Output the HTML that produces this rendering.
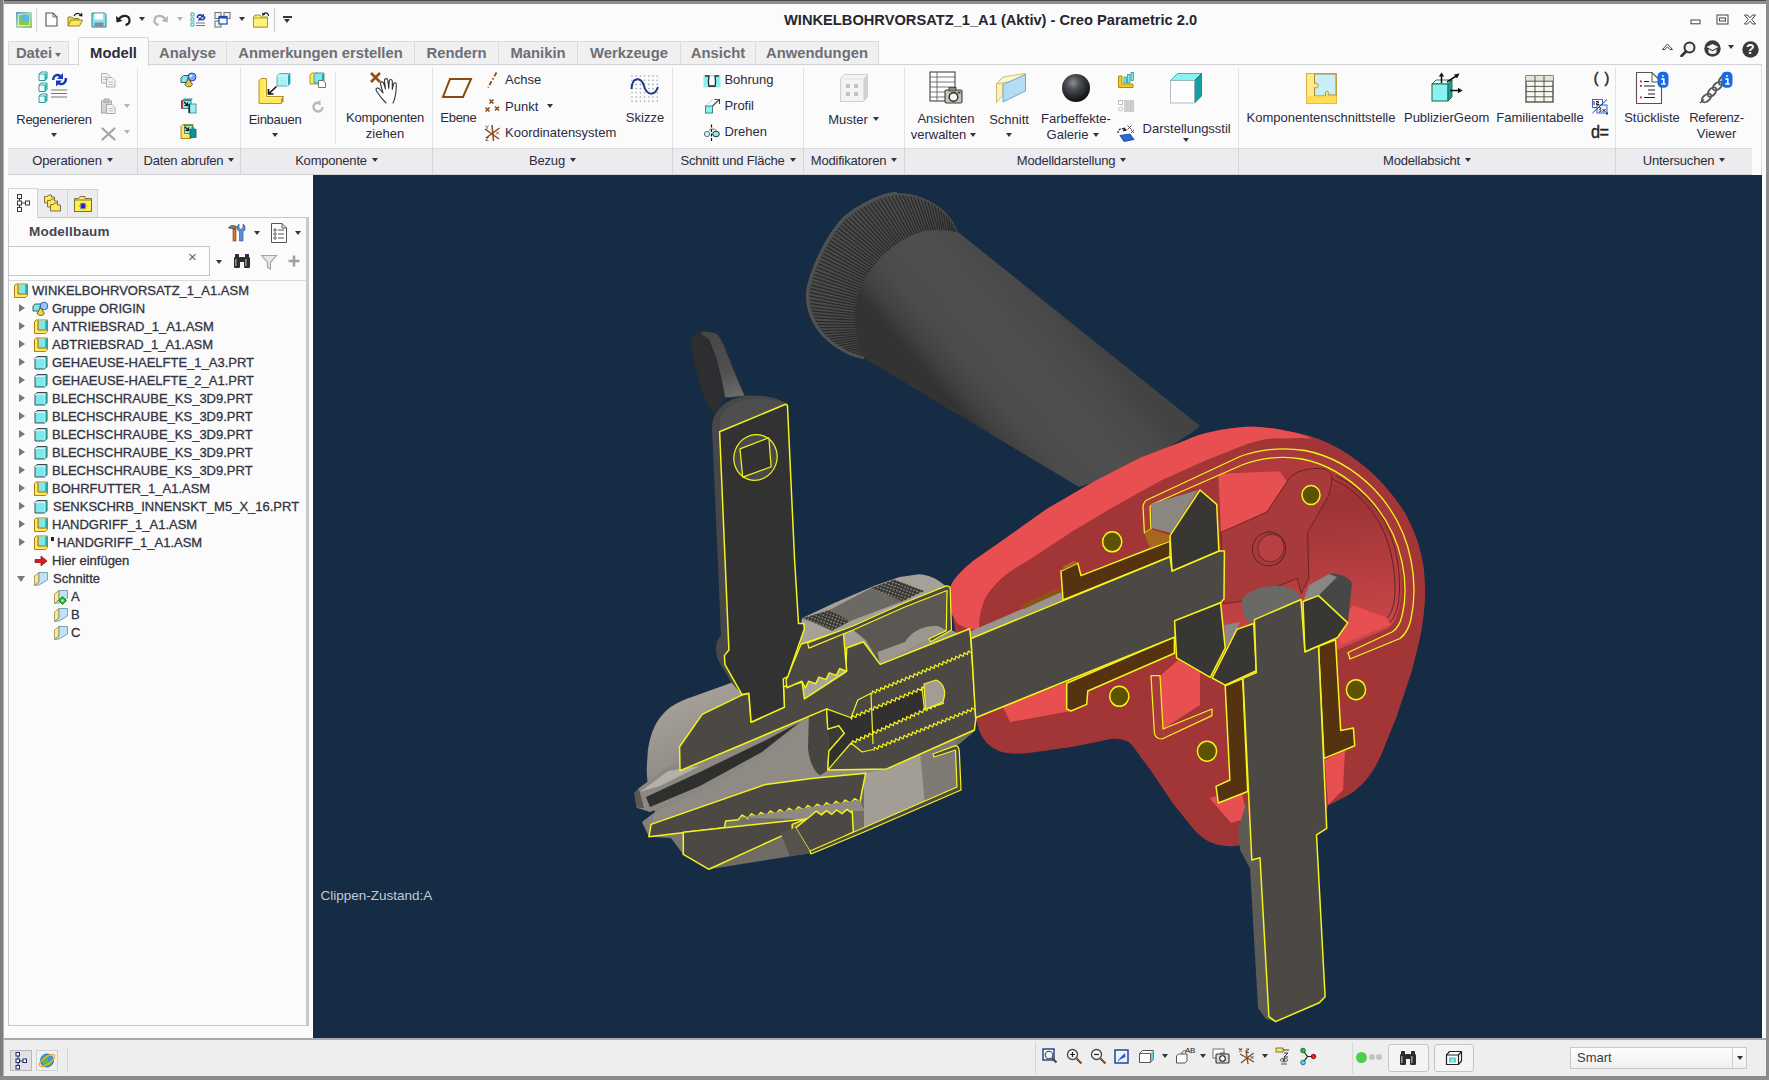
<!DOCTYPE html>
<html lang="de">
<head>
<meta charset="utf-8">
<title>WINKELBOHRVORSATZ_1_A1 (Aktiv) - Creo Parametric 2.0</title>
<style>
html,body{margin:0;padding:0;background:#fbfbfc;}
body{width:1769px;height:1080px;overflow:hidden;position:relative;font-family:"Liberation Sans",sans-serif;font-size:13px;color:#2b2b3c;}
#app{position:absolute;left:0;top:0;width:1769px;height:1080px;background:#fbfbfc;overflow:hidden;}
.abs{position:absolute;}
.t{position:absolute;white-space:nowrap;line-height:14px;letter-spacing:0;}
.n{letter-spacing:-0.28px;}
.c{transform:translateX(-50%);text-align:center;}
.tab{position:absolute;top:41px;height:23px;background:#f0f0f1;border:1px solid #dcdcde;border-bottom:none;box-sizing:border-box;font-weight:bold;font-size:14.8px;color:#6e6e76;line-height:22px;text-align:center;white-space:nowrap;}
.tab.act{top:37px;height:29px;background:#fbfbfc;color:#2b2b3c;line-height:30px;border-color:#d4d4d8;z-index:2;border-radius:2px 2px 0 0;}
.gl{letter-spacing:-0.2px;position:absolute;top:148px;height:26px;border-right:1px solid #d6d6d9;box-sizing:border-box;text-align:center;line-height:26px;white-space:nowrap;}
.dd{display:inline-block;width:0;height:0;border-left:3.5px solid transparent;border-right:3.5px solid transparent;border-top:4.5px solid #33333f;vertical-align:middle;margin-left:5px;position:relative;top:-2px;}
.dd.g{border-top-color:#b8b8bc;}
.da{position:absolute;width:0;height:0;border-left:3.5px solid transparent;border-right:3.5px solid transparent;border-top:4.5px solid #33333f;}
.vsep{position:absolute;width:1px;background:#e3e3e6;}
.tr{position:absolute;left:0;height:18px;line-height:18px;white-space:nowrap;font-size:13px;color:#33333f;-webkit-text-stroke:0.3px #33333f;}
.arr{position:absolute;width:0;height:0;border-top:4.5px solid transparent;border-bottom:4.5px solid transparent;border-left:6px solid #77777d;}
</style>
</head>
<body>
<div id="app">
<!-- window border -->
<div class="abs" style="left:0;top:0;width:1769px;height:4px;background:#8e8e8e;"></div><div class="abs" style="left:0;top:0;width:1769px;height:1px;background:#4c4c4c;"></div>
<div class="abs" style="left:0;top:0;width:3px;height:1080px;background:#7d7d7d;"></div>
<div class="abs" style="left:3px;top:0;width:1px;height:1080px;background:#b5b5b5;"></div>
<div class="abs" style="left:1766px;top:0;width:3px;height:1080px;background:#8b8b8b;"></div>
<div class="abs" style="left:0;top:1076px;width:1769px;height:4px;background:#8b8b8b;"></div>

<!-- TOPBAR -->
<svg class="abs" style="left:16px;top:12px" width="16" height="16" viewBox="0 0 16 16"><defs><linearGradient id="ag" x1="0" y1="0" x2="1" y2="1"><stop offset="0" stop-color="#3a8ad8"/><stop offset="0.500" stop-color="#9fd4a0"/><stop offset="1" stop-color="#7ac030"/></linearGradient></defs><rect x="0" y="0" width="16" height="16" fill="url(#ag)" opacity="0.850"/><rect x="2.500" y="2.500" width="11" height="11" fill="#8cc83c" stroke="#eaf6e0" stroke-width="0.800"/><rect x="6" y="2.500" width="7.500" height="7.500" fill="#58b8e8"/></svg>
<div class="abs" style="left:36px;top:8px;width:1px;height:24px;background:#d8d8dc;"></div>
<svg class="abs" style="left:45px;top:12px" width="13" height="15" viewBox="0 0 13 15"><path d="M1,1 H8 L12,5 V14 H1 Z" fill="#fff" stroke="#555" stroke-width="1.100"/><path d="M8,1 V5 H12" fill="none" stroke="#555" stroke-width="0.900"/></svg>
<svg class="abs" style="left:67px;top:11px" width="17" height="16" viewBox="0 0 17 16"><path d="M1,15 V6 H5 L6.500,7.500 H12 V9" fill="#f0d850" stroke="#8a7a20" stroke-width="0.900"/><path d="M1,15 L4,9 H15.500 L12.500,15 Z" fill="#f8e860" stroke="#8a7a20" stroke-width="0.900"/><path d="M7,5 C8.500,1.500 12.500,1.500 14,4.500" fill="none" stroke="#222" stroke-width="1.300"/><path d="M11.500,5 L15.500,5.500 L15,1.500 Z" fill="#222"/></svg>
<svg class="abs" style="left:91px;top:12px" width="16" height="16" viewBox="0 0 16 16"><path d="M1,1 H13.500 L15,2.500 V15 H1 Z" fill="#7fe9f0" stroke="#3a7a8a" stroke-width="1"/><rect x="3.500" y="1.500" width="8.500" height="6" fill="#fdfdfd"/><rect x="3.500" y="10.500" width="9" height="4" fill="#8a8a8e"/></svg>
<svg class="abs" style="left:115px;top:13px" width="17" height="13" viewBox="0 0 17 13"><path d="M4,6 C7,1.500 14,2 14.500,7 C14.800,10 12.500,11.500 10.500,12" fill="none" stroke="#222" stroke-width="2.200"/><path d="M1,3 L1.500,9.500 L7.500,8 Z" fill="#222"/></svg>
<span class="da" style="left:138.5px;top:17px;border-top-color:#33333f"></span>
<svg class="abs" style="left:152px;top:13px" width="17" height="13" viewBox="0 0 17 13"><path d="M13,6 C10,1.500 3,2 2.500,7 C2.200,10 4.500,11.500 6.500,12" fill="none" stroke="#b4b4b8" stroke-width="2.200"/><path d="M16,3 L15.500,9.500 L9.500,8 Z" fill="#b4b4b8"/></svg>
<span class="da" style="left:176.5px;top:17px;border-top-color:#b4b4b8"></span>
<svg class="abs" style="left:190px;top:12px" width="17" height="16" viewBox="0 0 17 16"><g fill="#e8ffff" stroke="#2a9a9c" stroke-width="0.800"><rect x="1" y="1" width="3" height="3"/><rect x="1" y="6" width="3" height="3"/><rect x="1" y="11" width="3" height="3"/></g><path d="M6.500,6 C6.500,2.500 10,1 12.500,3 L14,1.500 V5.500 H10 L11.300,4.200 C10,3.200 8,4 8.200,6 Z" fill="#1a3ab8"/><path d="M15.500,4.500 C16,8 12.500,9.500 10,8 L8.500,9.500 V5.800 H12.500 L11.200,7 C12.500,7.800 14,7 13.800,4.500 Z" fill="#1a3ab8"/><path d="M6,11 H15 M6,13.500 H15" stroke="#777" stroke-width="1"/></svg>
<svg class="abs" style="left:214px;top:11px" width="17" height="17" viewBox="0 0 17 17"><g fill="#f4f4f4" stroke="#777" stroke-width="1.100"><rect x="1" y="1.500" width="6" height="6"/><rect x="10" y="1.500" width="6" height="6"/><rect x="1" y="10" width="6" height="6"/></g><rect x="5" y="5.500" width="8" height="7.500" fill="#fdfdfd" stroke="#1a4ab8" stroke-width="1.200"/><rect x="5" y="5.500" width="8" height="2" fill="#1a4ab8"/></svg>
<span class="da" style="left:238.5px;top:17px;border-top-color:#33333f"></span>
<svg class="abs" style="left:252px;top:11px" width="18" height="17" viewBox="0 0 18 17"><path d="M1.500,6 L3,4 H8 L9.500,6 H15.500 V16 H1.500 Z" fill="#f8ec60" stroke="#9a8a20" stroke-width="0.900"/><path d="M1.500,16 V7 H15.500 V16 Z" fill="#fbf27a" stroke="#9a8a20" stroke-width="0.700"/><path d="M16.500,5 C16.500,2 13.500,1 11.500,3" fill="none" stroke="#222" stroke-width="1.200"/><path d="M10,1.500 L10.500,5 L13.500,3.500 Z" fill="#222"/></svg>
<div class="abs" style="left:274px;top:8px;width:1px;height:24px;background:#c8c8cc;"></div>
<div class="abs" style="left:283px;top:16px;width:9px;height:1.500px;background:#33333f;"></div>
<span class="da" style="left:284.0px;top:19px;border-top-color:#33333f"></span>
<svg class="abs" style="left:1690px;top:19px" width="11" height="6" viewBox="0 0 11 6"><rect x="1" y="1" width="9" height="3.800" fill="#fdfdfd" stroke="#444" stroke-width="1"/></svg>
<svg class="abs" style="left:1716px;top:14px" width="13" height="11" viewBox="0 0 13 11"><rect x="1" y="1" width="11" height="9" fill="#fdfdfd" stroke="#444" stroke-width="1"/><rect x="3.500" y="4" width="6" height="3" fill="none" stroke="#444" stroke-width="1"/></svg>
<svg class="abs" style="left:1743px;top:14px" width="14" height="11" viewBox="0 0 14 11"><path d="M1.500,1 H4.500 L7,3.800 L9.500,1 H12.500 L8.800,5.500 L12.500,10 H9.500 L7,7.200 L4.500,10 H1.500 L5.200,5.500 Z" fill="#fdfdfd" stroke="#444" stroke-width="1"/></svg>
<svg class="abs" style="left:1661px;top:42px" width="13" height="9" viewBox="0 0 13 9"><path d="M1.500,7.500 L6.500,2 L11.500,7.500 H9 L6.500,4.800 L4,7.500 Z" fill="#fdfdfd" stroke="#444" stroke-width="1"/></svg>
<svg class="abs" style="left:1680px;top:41px" width="16" height="16" viewBox="0 0 16 16"><circle cx="9.500" cy="6.500" r="5" fill="#e8f4f8" stroke="#333" stroke-width="2"/><path d="M6,10.500 L1.500,15" stroke="#333" stroke-width="2.600" stroke-linecap="round"/></svg>
<svg class="abs" style="left:1704px;top:40px" width="17" height="17" viewBox="0 0 17 17"><circle cx="8.500" cy="8.500" r="8.200" fill="#3a3a3c"/><path d="M2.500,7 L8.500,4 L14.500,7 L8.500,10 Z" fill="#f4f4f4"/><path d="M4.500,9 V12.500 C6.500,14.500 10.500,14.500 12.500,12.500 V9 L8.500,11.200 Z" fill="#f4f4f4"/></svg>
<span class="da" style="left:1727.5px;top:45px;border-top-color:#33333f"></span>
<svg class="abs" style="left:1742px;top:41px" width="17" height="17" viewBox="0 0 17 17"><circle cx="8.500" cy="8.500" r="8.200" fill="#3a3a3c"/></svg>
<div class="t" style="left:1746px;top:42px;font-weight:bold;font-size:14px;line-height:15px;color:#fff;">?</div>
<!-- /TOPBAR -->
<!-- title -->
<div class="t" id="title" style="letter-spacing:0;left:784px;top:12px;font-weight:bold;font-size:14.67px;line-height:16px;color:#26262e;">WINKELBOHRVORSATZ_1_A1 (Aktiv) - Creo Parametric 2.0</div>

<!-- TABS -->
<div class="abs" style="left:8px;top:64px;width:1754px;height:1px;background:#d4d4d8;"></div>
<div class="tab" style="left:8px;width:61px;">Datei<span class="dd" style="border-top-color:#6e6e76;margin-left:3px;top:1px;border-left-width:3px;border-right-width:3px;border-top-width:4px"></span></div>
<div class="tab act" style="left:78px;width:71px;">Modell</div>
<div class="tab" style="left:148px;width:79px;">Analyse</div>
<div class="tab" style="left:226px;width:189px;">Anmerkungen erstellen</div>
<div class="tab" style="left:414px;width:85px;">Rendern</div>
<div class="tab" style="left:498px;width:80px;">Manikin</div>
<div class="tab" style="left:577px;width:104px;">Werkzeuge</div>
<div class="tab" style="left:680px;width:76px;">Ansicht</div>
<div class="tab" style="left:755px;width:124px;">Anwendungen</div>

<!-- RIBBON group label bar -->
<div class="abs" id="glbar" style="left:8px;top:148px;width:1744px;height:27px;background:#ececee;border-top:1px solid #dadadd;border-bottom:1px solid #d0d0d4;box-sizing:border-box;"></div>
<div class="gl" style="left:8px;width:130px;">Operationen<span class="dd"></span></div>
<div class="gl" style="left:138px;width:103px;">Daten abrufen<span class="dd"></span></div>
<div class="gl" style="left:241px;width:192px;">Komponente<span class="dd"></span></div>
<div class="gl" style="left:433px;width:240px;">Bezug<span class="dd"></span></div>
<div class="gl" style="left:673px;width:131px;">Schnitt und Fläche<span class="dd"></span></div>
<div class="gl" style="left:804px;width:101px;">Modifikatoren<span class="dd"></span></div>
<div class="gl" style="left:905px;width:334px;">Modelldarstellung<span class="dd"></span></div>
<div class="gl" style="left:1239px;width:377px;">Modellabsicht<span class="dd"></span></div>
<div class="gl" style="left:1616px;width:136px;border-right:none;">Untersuchen<span class="dd"></span></div>

<!-- RIBBON-CONTENT -->
<div class="abs" style="left:1752px;top:65px;width:10px;height:110px;border-right:1px solid #dcdce0;box-sizing:border-box;"></div>
<div class="vsep" style="left:137px;top:68px;height:80px"></div>
<div class="vsep" style="left:240px;top:68px;height:80px"></div>
<div class="vsep" style="left:432px;top:68px;height:80px"></div>
<div class="vsep" style="left:672px;top:68px;height:80px"></div>
<div class="vsep" style="left:803px;top:68px;height:80px"></div>
<div class="vsep" style="left:904px;top:68px;height:80px"></div>
<div class="vsep" style="left:1238px;top:68px;height:80px"></div>
<div class="vsep" style="left:1615px;top:68px;height:80px"></div>
<div class="vsep" style="left:335px;top:72px;height:72px"></div>
<svg class="abs" style="left:38px;top:71px" width="32" height="33" viewBox="0 0 32 33"><g transform="translate(0,0)"><path d="M1,3 L3,1 L9,1 L9,7.500 L7,9.500 L1,9.500 Z" fill="#e8ffff" stroke="#2a8a8c" stroke-width="0.9"/><path d="M7,3 L9,1 L9,7.500 L7,9.500 Z" fill="#35c2c4"/><path d="M1,3 L7,3 L7,9.500" fill="none" stroke="#2a8a8c" stroke-width="0.8"/></g><g transform="translate(0,11)"><path d="M1,3 L3,1 L9,1 L9,7.500 L7,9.500 L1,9.500 Z" fill="#e8ffff" stroke="#2a8a8c" stroke-width="0.9"/><path d="M7,3 L9,1 L9,7.500 L7,9.500 Z" fill="#35c2c4"/><path d="M1,3 L7,3 L7,9.500" fill="none" stroke="#2a8a8c" stroke-width="0.8"/></g><g transform="translate(0,22)"><path d="M1,3 L3,1 L9,1 L9,7.500 L7,9.500 L1,9.500 Z" fill="#e8ffff" stroke="#2a8a8c" stroke-width="0.9"/><path d="M7,3 L9,1 L9,7.500 L7,9.500 Z" fill="#35c2c4"/><path d="M1,3 L7,3 L7,9.500" fill="none" stroke="#2a8a8c" stroke-width="0.8"/></g><path d="M14,9 C14,4 19,1 23,4 L25,2 L25,8 L19,8 L21,6 C19,4 16,6 16.500,9 Z" fill="#1a3ab8"/><path d="M29,7 C30,12 25,16 20,13.500 L18,15.500 L18,9.500 L24,9.500 L22,11.500 C24.500,13 27,10.500 26.500,7 Z" fill="#1a3ab8"/><path d="M13,19 H29 M13,22.500 H29 M13,26 H29" stroke="#777" stroke-width="1.2"/></svg>
<div class="t c n" style="left:54px;top:113.3px;">Regenerieren</div>
<span class="da" style="left:50.5px;top:132.6px;border-top-color:#33333f"></span>
<svg class="abs" style="left:100px;top:72px" width="16" height="16" viewBox="0 0 16 16"><g fill="#f4f4f4" stroke="#b0b0b4" stroke-width="1"><path d="M1.500,1.500 H7 L10,4.500 V11 H1.500 Z"/><path d="M6.500,5.500 H12 L15,8.500 V15 H6.500 Z"/></g><path d="M3,5 H7 M3,7.500 H8 M8.500,10 H13 M8.500,12.500 H13" stroke="#b0b0b4" stroke-width="0.8"/></svg>
<svg class="abs" style="left:100px;top:98px" width="16" height="16" viewBox="0 0 16 16"><rect x="1.500" y="3" width="10" height="12" fill="#d4d4d6" stroke="#a8a8ac"/><rect x="4" y="1" width="5" height="3.500" fill="#c0c0c4" stroke="#a0a0a4" stroke-width="0.8"/><path d="M6.500,6.500 H12 L15,9.500 V15.500 H6.500 Z" fill="#f4f4f4" stroke="#a8a8ac"/><path d="M8.500,10.500 H13 M8.500,12.800 H13" stroke="#b0b0b4" stroke-width="0.8"/></svg>
<span class="da" style="left:123.5px;top:103.5px;border-top-color:#b4b4b8"></span>
<svg class="abs" style="left:101px;top:127px" width="15" height="14" viewBox="0 0 15 14"><path d="M1.500,1.500 L13.500,12.500 M13.500,1.500 L1.500,12.500" stroke="#a4a4a8" stroke-width="2.200" stroke-linecap="round"/></svg>
<span class="da" style="left:123.5px;top:129.5px;border-top-color:#b4b4b8"></span>
<svg class="abs" style="left:180px;top:72px" width="17" height="16" viewBox="0 0 17 16"><path d="M1,6 L3.500,3.500 H10 L8,6 V10.500 H1 Z" fill="#7fe9ea" stroke="#2a4a55" stroke-width="0.9"/><circle cx="12" cy="5" r="4" fill="#7aa8ff" stroke="#1a40b0" stroke-width="0.9"/><circle cx="11" cy="4" r="1.300" fill="#dfe9ff"/><path d="M5,12.500 L8.500,6.500 L12.500,12.500 C11,15.500 6.500,15.500 5,12.500 Z" fill="#e8c84a" stroke="#5a4000" stroke-width="0.9"/></svg>
<svg class="abs" style="left:180px;top:97px" width="17" height="17" viewBox="0 0 17 17"><path d="M2,3.500 L4,1.500 H13 L11,3.500 Z" fill="#2c9b9d"/><rect x="2" y="3.500" width="9" height="8" fill="#7fe9ea" stroke="#2a6a70" stroke-width="0.8"/><rect x="1" y="3.500" width="1.800" height="8" fill="#e01818"/><rect x="9" y="7" width="7" height="9" fill="#9ff0f0" stroke="#2a8a8c" stroke-width="0.8"/><rect x="8.500" y="7" width="1.600" height="9" fill="#222"/><path d="M4,5 L7.500,8.500 M7.500,5.500 V8.500 H4.500" stroke="#111" stroke-width="1.200" fill="none"/></svg>
<svg class="abs" style="left:180px;top:123px" width="17" height="17" viewBox="0 0 17 17"><path d="M1,3.500 L3,1.500 H13 V13 L11,15.500 H1 Z" fill="#ffe760" stroke="#9a7a10" stroke-width="0.9"/><rect x="4.500" y="2.500" width="8" height="8" fill="#7fe9ea" stroke="#2a6a70" stroke-width="0.7"/><rect x="10" y="6.500" width="6" height="8" fill="#0f9092" stroke="#0a5a5c" stroke-width="0.8"/><rect x="11.500" y="4.500" width="3" height="2.500" fill="#0f9092"/><path d="M5,4 L8.500,7.500 M8.500,4.500 V7.500 H5.500" stroke="#111" stroke-width="1.200" fill="none"/></svg>
<svg class="abs" style="left:257px;top:72px" width="35" height="33" viewBox="0 0 35 33"><path d="M20,4 L22.500,1.500 H33 V11.500 L30.500,14 H20 Z" fill="#a8f2f2" stroke="#3aa0a2" stroke-width="0.8"/><path d="M30.500,4 L33,1.500 V11.500 L30.500,14 Z" fill="#1fa6a8"/><path d="M20,4 H30.500 V14" fill="none" stroke="#e0ffff" stroke-width="0.8"/><path d="M2,8.500 L4,6.500 H9.500 V24.500 H26.500 L24.500,27 V31.500 H2 Z" fill="#ffe85c" stroke="#b08a10" stroke-width="0.9"/><path d="M8,8.500 V26 H24.500" fill="none" stroke="#fff6b0" stroke-width="1"/><path d="M24.500,27 L26.500,24.500 V29.500 L24.500,31.500 Z" fill="#b8901a"/><path d="M19.500,14.500 L12,21.500 M11.500,17 V22 H16.500" stroke="#111" stroke-width="1.600" fill="none"/></svg>
<div class="t c n" style="left:275px;top:113.2px;">Einbauen</div>
<span class="da" style="left:271.5px;top:132.9px;border-top-color:#33333f"></span>
<svg class="abs" style="left:309px;top:72px" width="18" height="17" viewBox="0 0 18 17"><path d="M1,3 L3,1 H9 V12 H1 Z" fill="#ffe85c" stroke="#b08a10" stroke-width="0.9"/><path d="M5,3 L7,1 H15 V9 L13,11 H5 Z" fill="#7fe9ea" stroke="#2a8a8c" stroke-width="0.8"/><path d="M13,3 L15,1 V9 L13,11 Z" fill="#1fa6a8"/><path d="M9.500,8.500 H14 L16.500,11 V15.500 H9.500 Z" fill="#fff" stroke="#666" stroke-width="0.9"/></svg>
<svg class="abs" style="left:311px;top:100px" width="14" height="14" viewBox="0 0 14 14"><path d="M11.500,7 A4.500,4.500 0 1 1 7,2.500" fill="none" stroke="#b8b8bc" stroke-width="2.400"/><path d="M5.500,0 L10,2.500 L5.500,5.500 Z" fill="#b8b8bc" transform="rotate(180 7.500 2.750) translate(0,0)"/></svg>
<svg class="abs" style="left:369px;top:71px" width="33" height="34" viewBox="0 0 33 34"><path d="M2,2 L11,11 M11,2 L2,11" stroke="#9a4a1a" stroke-width="2.600"/><g fill="#fff" stroke="#333" stroke-width="1.100" stroke-linejoin="round" stroke-linecap="round"><path d="M17,32 C13,28 10,24 7.500,20 C6,17.500 8.500,16 10.500,18 L14,22 L11.500,13 C11,10.500 14,10 14.800,12.500 L16.500,18 L15.500,9.500 C15.300,7 18.500,7 18.800,9.500 L19.800,17.500 L20.200,10 C20.400,7.800 23.300,8 23.300,10.500 L23.300,18.500 L24.500,13 C25,11 27.500,11.500 27.300,13.800 C27,19 27.500,25 24,32"/></g></svg>
<div class="t c n" style="left:385px;top:111.4px;">Komponenten</div>
<div class="t c" style="left:385px;top:126.8px;">ziehen</div>
<svg class="abs" style="left:441px;top:77px" width="32" height="22" viewBox="0 0 32 22"><path d="M9,2 L30,2 L22,20 L2,20 Z" fill="#fdfdf8" stroke="#8a4a12" stroke-width="2"/></svg>
<div class="t c n" style="left:458.4px;top:110.9px;">Ebene</div>
<svg class="abs" style="left:486px;top:71px" width="12" height="18" viewBox="0 0 12 18"><path d="M10.500,1.500 L2,16.500" stroke="#8a4a12" stroke-width="1.800" stroke-dasharray="4.500 2 1.500 2"/></svg>
<div class="t" style="left:505px;top:73.1px;">Achse</div>
<svg class="abs" style="left:484px;top:98px" width="17" height="17" viewBox="0 0 17 17"><g stroke="#8a4a12" stroke-width="1.500"><path d="M5.500,1.500 l4,4 m0,-4 l-4,4 M1.500,9.500 l4,4 m0,-4 l-4,4 M11,8.500 l4,4 m0,-4 l-4,4"/></g></svg>
<div class="t" style="left:505px;top:99.9px;">Punkt</div>
<span class="da" style="left:546.5px;top:104px;border-top-color:#33333f"></span>
<svg class="abs" style="left:484px;top:124px" width="17" height="18" viewBox="0 0 17 18"><g stroke="#8a4a12" stroke-width="1.500"><path d="M8,1 L9.500,17 M1,5 L15,15 M15.500,4 L2,14"/></g><path d="M12,7.500 l3,3 m0,-3 l-3,3 M1.500,13.500 h3 l-3,3 h3 M1.500,1.500 l1.500,2 l1.500,-2 M3,3.500 v2" stroke="#555" stroke-width="0.800" fill="none"/></svg>
<div class="t" style="left:505px;top:126.2px;">Koordinatensystem</div>
<svg class="abs" style="left:630px;top:74px" width="30" height="28" viewBox="0 0 30 28"><circle cx="2.0" cy="2.0" r="0.800" fill="#9aa0b0"/><circle cx="2.0" cy="6.2" r="0.800" fill="#9aa0b0"/><circle cx="2.0" cy="10.4" r="0.800" fill="#9aa0b0"/><circle cx="2.0" cy="14.600000000000001" r="0.800" fill="#9aa0b0"/><circle cx="2.0" cy="18.8" r="0.800" fill="#9aa0b0"/><circle cx="2.0" cy="23.0" r="0.800" fill="#9aa0b0"/><circle cx="2.0" cy="27.200000000000003" r="0.800" fill="#9aa0b0"/><circle cx="6.2" cy="2.0" r="0.800" fill="#9aa0b0"/><circle cx="6.2" cy="6.2" r="0.800" fill="#9aa0b0"/><circle cx="6.2" cy="10.4" r="0.800" fill="#9aa0b0"/><circle cx="6.2" cy="14.600000000000001" r="0.800" fill="#9aa0b0"/><circle cx="6.2" cy="18.8" r="0.800" fill="#9aa0b0"/><circle cx="6.2" cy="23.0" r="0.800" fill="#9aa0b0"/><circle cx="6.2" cy="27.200000000000003" r="0.800" fill="#9aa0b0"/><circle cx="10.4" cy="2.0" r="0.800" fill="#9aa0b0"/><circle cx="10.4" cy="6.2" r="0.800" fill="#9aa0b0"/><circle cx="10.4" cy="10.4" r="0.800" fill="#9aa0b0"/><circle cx="10.4" cy="14.600000000000001" r="0.800" fill="#9aa0b0"/><circle cx="10.4" cy="18.8" r="0.800" fill="#9aa0b0"/><circle cx="10.4" cy="23.0" r="0.800" fill="#9aa0b0"/><circle cx="10.4" cy="27.200000000000003" r="0.800" fill="#9aa0b0"/><circle cx="14.600000000000001" cy="2.0" r="0.800" fill="#9aa0b0"/><circle cx="14.600000000000001" cy="6.2" r="0.800" fill="#9aa0b0"/><circle cx="14.600000000000001" cy="10.4" r="0.800" fill="#9aa0b0"/><circle cx="14.600000000000001" cy="14.600000000000001" r="0.800" fill="#9aa0b0"/><circle cx="14.600000000000001" cy="18.8" r="0.800" fill="#9aa0b0"/><circle cx="14.600000000000001" cy="23.0" r="0.800" fill="#9aa0b0"/><circle cx="14.600000000000001" cy="27.200000000000003" r="0.800" fill="#9aa0b0"/><circle cx="18.8" cy="2.0" r="0.800" fill="#9aa0b0"/><circle cx="18.8" cy="6.2" r="0.800" fill="#9aa0b0"/><circle cx="18.8" cy="10.4" r="0.800" fill="#9aa0b0"/><circle cx="18.8" cy="14.600000000000001" r="0.800" fill="#9aa0b0"/><circle cx="18.8" cy="18.8" r="0.800" fill="#9aa0b0"/><circle cx="18.8" cy="23.0" r="0.800" fill="#9aa0b0"/><circle cx="18.8" cy="27.200000000000003" r="0.800" fill="#9aa0b0"/><circle cx="23.0" cy="2.0" r="0.800" fill="#9aa0b0"/><circle cx="23.0" cy="6.2" r="0.800" fill="#9aa0b0"/><circle cx="23.0" cy="10.4" r="0.800" fill="#9aa0b0"/><circle cx="23.0" cy="14.600000000000001" r="0.800" fill="#9aa0b0"/><circle cx="23.0" cy="18.8" r="0.800" fill="#9aa0b0"/><circle cx="23.0" cy="23.0" r="0.800" fill="#9aa0b0"/><circle cx="23.0" cy="27.200000000000003" r="0.800" fill="#9aa0b0"/><circle cx="27.200000000000003" cy="2.0" r="0.800" fill="#9aa0b0"/><circle cx="27.200000000000003" cy="6.2" r="0.800" fill="#9aa0b0"/><circle cx="27.200000000000003" cy="10.4" r="0.800" fill="#9aa0b0"/><circle cx="27.200000000000003" cy="14.600000000000001" r="0.800" fill="#9aa0b0"/><circle cx="27.200000000000003" cy="18.8" r="0.800" fill="#9aa0b0"/><circle cx="27.200000000000003" cy="23.0" r="0.800" fill="#9aa0b0"/><circle cx="27.200000000000003" cy="27.200000000000003" r="0.800" fill="#9aa0b0"/><path d="M1.500,15 C2,3 11,2 14,12 C17,22 25,22 28,13" fill="none" stroke="#1a3a8c" stroke-width="2"/></svg>
<div class="t c" style="left:645px;top:110.9px;">Skizze</div>
<svg class="abs" style="left:703px;top:74px" width="18" height="14" viewBox="0 0 18 14"><rect x="0.500" y="1" width="17" height="12.500" fill="#8af0f0"/><path d="M2,2 H6 C5.500,6 5,9 6,12 H12 C13,9 12.500,6 12,2 H16" fill="none" stroke="#333" stroke-width="1.300"/><path d="M6,2.500 H12 V12 H6 Z" fill="#fdfdfd"/><path d="M6,2.200 C5.500,6 5,9 6,12 H12 C13,9 12.500,6 12,2.200" fill="none" stroke="#333" stroke-width="1.300"/></svg>
<div class="t" style="left:724.4px;top:73.1px;">Bohrung</div>
<svg class="abs" style="left:704px;top:98px" width="17" height="17" viewBox="0 0 17 17"><rect x="1.500" y="8" width="7" height="7" fill="#8af0f0" stroke="#2a7a7c" stroke-width="0.900"/><path d="M8.500,8 L15.500,1.500 M11,1.500 H15.500 V6" fill="none" stroke="#444" stroke-width="1.100"/><path d="M1.500,8 L8.500,1.500 H15" fill="none" stroke="#888" stroke-width="0.700" stroke-dasharray="1.500 1.200"/></svg>
<div class="t" style="left:724.4px;top:98.9px;">Profil</div>
<svg class="abs" style="left:703px;top:124px" width="18" height="18" viewBox="0 0 18 18"><path d="M8.500,0.500 V17.500" stroke="#111" stroke-width="1.200" stroke-dasharray="3 1.500"/><circle cx="4" cy="10" r="2.600" fill="#cff" stroke="#555" stroke-width="0.900"/><ellipse cx="13" cy="10" rx="3.300" ry="2.800" fill="#8af0f0" stroke="#333" stroke-width="1"/><path d="M6,6.500 C8,4.500 11,4.500 13.500,6.500" fill="none" stroke="#555" stroke-width="0.900"/></svg>
<div class="t" style="left:724.4px;top:125.1px;">Drehen</div>
<svg class="abs" style="left:839px;top:73px" width="30" height="30" viewBox="0 0 30 30"><path d="M1.500,6 L5.500,1.500 H28.500 V24 L24.500,28.500 H1.500 Z" fill="#f3f3f4" stroke="#d0d0d3" stroke-width="1"/><path d="M24.500,6 L28.500,1.500 V24 L24.500,28.500 Z" fill="#d2d2d5"/><path d="M1.500,6 H24.500 V28.500" fill="none" stroke="#dedee0" stroke-width="0.800"/><g fill="#c4c4c8"><rect x="7" y="11" width="4" height="4"/><rect x="15" y="11" width="4" height="4"/><rect x="7" y="19" width="4" height="4"/><rect x="15" y="19" width="4" height="4"/></g></svg>
<div class="t c" style="left:848px;top:112.6px;">Muster</div>
<span class="da" style="left:872.5px;top:117px;border-top-color:#33333f"></span>
<svg class="abs" style="left:929px;top:71px" width="34" height="33" viewBox="0 0 34 33"><rect x="1" y="1" width="25" height="29" fill="#fdfdfd" stroke="#444" stroke-width="1.100"/><path d="M1,6 H26" stroke="#555" stroke-width="0.800"/><path d="M1,11 H26" stroke="#555" stroke-width="0.800"/><path d="M1,16 H26" stroke="#555" stroke-width="0.800"/><path d="M1,21 H26" stroke="#555" stroke-width="0.800"/><path d="M1,26 H26" stroke="#555" stroke-width="0.800"/><path d="M8,1 V30" stroke="#555" stroke-width="0.800"/><rect x="16" y="19" width="17" height="13" rx="1.500" fill="#c8c4b8" stroke="#3a3a3a" stroke-width="1.100"/><rect x="20" y="16.500" width="7" height="3.500" fill="#8a867a" stroke="#3a3a3a" stroke-width="0.800"/><circle cx="24.500" cy="26" r="4.300" fill="#f4f4f4" stroke="#2a2a2a" stroke-width="1.400"/><rect x="28.500" y="20.500" width="3" height="2" fill="#444"/></svg>
<div class="t c" style="left:946px;top:112.2px;">Ansichten</div>
<div class="t c" style="left:938.5px;top:128.0px;">verwalten</div>
<span class="da" style="left:969.5px;top:132.5px;border-top-color:#33333f"></span>
<svg class="abs" style="left:995px;top:72px" width="32" height="32" viewBox="0 0 32 32"><path d="M1.500,12 L8,5 V23 L1.500,30.500 Z" fill="#fff2b0" stroke="#c8b868" stroke-width="0.900"/><path d="M1.500,12 L8,5 L30.500,1.500 L24,8 Z" fill="#fff6cc" stroke="#c8b868" stroke-width="0.900"/><path d="M8,12.500 L30.500,2.500 V19 L8,30 Z" fill="#b4dcf4" stroke="#6aa0c8" stroke-width="0.900"/></svg>
<div class="t c" style="left:1009px;top:113.0px;">Schnitt</div>
<span class="da" style="left:1005.5px;top:133px;border-top-color:#33333f"></span>
<svg class="abs" style="left:1061px;top:73px" width="30" height="30" viewBox="0 0 30 30"><defs><radialGradient id="sph" cx="0.400" cy="0.320" r="0.700"><stop offset="0" stop-color="#8a8e92"/><stop offset="0.350" stop-color="#4a4e52"/><stop offset="1" stop-color="#0c0c0e"/></radialGradient></defs><circle cx="15" cy="15" r="14" fill="url(#sph)"/></svg>
<div class="t c" style="left:1076px;top:112.2px;">Farbeffekte-</div>
<div class="t c" style="left:1067.5px;top:128.0px;">Galerie</div>
<span class="da" style="left:1092.5px;top:132.5px;border-top-color:#33333f"></span>
<svg class="abs" style="left:1117px;top:71px" width="18" height="18" viewBox="0 0 18 18"><path d="M1.500,5 H5 V13 H16 V16.500 H1.500 Z" fill="#f0cc20" stroke="#a88408" stroke-width="0.900"/><rect x="7" y="6" width="2.500" height="6" fill="#7fe9ea" stroke="#2a8a8c" stroke-width="0.700"/><rect x="10.500" y="3.500" width="2.500" height="8.500" fill="#7fe9ea" stroke="#2a8a8c" stroke-width="0.700"/><rect x="14" y="1.500" width="2.500" height="8" fill="#7fe9ea" stroke="#2a8a8c" stroke-width="0.700"/></svg>
<svg class="abs" style="left:1117px;top:99px" width="18" height="14" viewBox="0 0 18 14"><g fill="none" stroke="#bcbcc0" stroke-width="0.900"><rect x="1.500" y="1.500" width="4" height="4"/><circle cx="3.500" cy="10" r="2"/></g><g fill="#d4d4d7" stroke="#bcbcc0" stroke-width="0.700"><rect x="7.500" y="1.500" width="2.600" height="11"/><rect x="10.800" y="1.500" width="2.600" height="11"/><rect x="14.100" y="1.500" width="2.600" height="11"/></g></svg>
<svg class="abs" style="left:1116px;top:124px" width="20" height="18" viewBox="0 0 20 18"><path d="M4,11.500 L14,10 L18,15.500 L8,17.500 Z" fill="#2a6ad8" stroke="#123a90" stroke-width="0.800"/><path d="M2,9 C2,5 6,3.500 9,5.500" fill="none" stroke="#222" stroke-width="1.200" stroke-dasharray="2 1.200"/><path d="M8,3 L11,6.500 L7,7.500 Z" fill="#222"/><path d="M11.500,1.500 l4,4 m0,-4 l-4,4 M15,6 l3,3 m0,-3 l-3,3" stroke="#444" stroke-width="0.900"/></svg>
<svg class="abs" style="left:1169px;top:72px" width="34" height="32" viewBox="0 0 34 32"><path d="M1.500,8.500 L8.500,1.500 H32.500 L25.500,8.500 Z" fill="#8af2f2" stroke="#2aa0a2" stroke-width="0.800"/><path d="M25.500,8.500 L32.500,1.500 V24 L25.500,31 Z" fill="#12a0a2" stroke="#0a7476" stroke-width="0.800"/><rect x="1.500" y="8.500" width="24" height="22.500" fill="#fdfdfd" stroke="#9ab0b4" stroke-width="0.800"/></svg>
<div class="t c" style="left:1186.7px;top:121.7px;">Darstellungsstil</div>
<span class="da" style="left:1182.5px;top:137.5px;border-top-color:#33333f"></span>
<svg class="abs" style="left:1306px;top:73px" width="31" height="31" viewBox="0 0 31 31"><rect x="0.500" y="0.500" width="30" height="30" fill="#ffe98a" stroke="#d8b040" stroke-width="1"/><path d="M8.500,1 H30 V22 H22 C24,17 18,17 19.500,22 L20,23 H8.500 V14.500 C13.500,16.500 13.500,9 8.500,10.500 Z" fill="#c8eef8" stroke="#b08a30" stroke-width="1"/><path d="M0.500,23 H30.500 V30.500 H0.500 Z" fill="#ffd840" opacity="0.700"/></svg>
<div class="t c" style="left:1321px;top:110.8px;">Komponentenschnittstelle</div>
<svg class="abs" style="left:1430px;top:72px" width="34" height="32" viewBox="0 0 34 32"><path d="M2,12 L6,8 H22 L18,12 Z" fill="#eaffff" stroke="#1a6a3a" stroke-width="0.900"/><rect x="2" y="12" width="16" height="17" fill="#8af2f2" stroke="#1a6a3a" stroke-width="1"/><path d="M18,12 L22,8 V25 L18,29 Z" fill="#12a0a2" stroke="#1a6a3a" stroke-width="0.900"/><g stroke="#111" stroke-width="1.500" fill="#111"><path d="M11.500,11 V3"/><path d="M8.800,4.500 L11.500,0.500 L14.200,4.500 Z" stroke="none"/><path d="M20,18.500 H29"/><path d="M28,15.800 L32.500,18.500 L28,21.200 Z" stroke="none"/><path d="M17,10 L27,3.500"/><path d="M24,2.500 L29.500,1.500 L27,6.500 Z" stroke="none"/></g></svg>
<div class="t c" style="left:1446.6px;top:110.8px;">PublizierGeom</div>
<svg class="abs" style="left:1525px;top:75px" width="30" height="28" viewBox="0 0 30 28"><rect x="1" y="1" width="27" height="26" fill="#f8f8ee" stroke="#3a3a36" stroke-width="1.200"/><rect x="1" y="1" width="27" height="5.200" fill="#e4e4d8"/><path d="M1,6.2 H28" stroke="#4a4a44" stroke-width="0.900"/><path d="M1,11.4 H28" stroke="#4a4a44" stroke-width="0.900"/><path d="M1,16.6 H28" stroke="#4a4a44" stroke-width="0.900"/><path d="M1,21.8 H28" stroke="#4a4a44" stroke-width="0.900"/><path d="M10,1 V27 M19,1 V27" stroke="#4a4a44" stroke-width="0.900"/></svg>
<div class="t c" style="left:1540px;top:110.8px;">Familientabelle</div>
<div class="t" style="left:1592px;top:71px;font-size:15px;line-height:17px;color:#222;letter-spacing:1px;font-family:'Liberation Mono',monospace;-webkit-text-stroke:0.300px #222;">()</div>
<svg class="abs" style="left:1591px;top:98px" width="18" height="17" viewBox="0 0 18 17"><rect x="1.500" y="1.500" width="10" height="8" fill="#fff" stroke="#2a5ac0" stroke-width="0.900"/><rect x="6" y="7" width="10" height="8" fill="#e8f0ff" stroke="#2a5ac0" stroke-width="0.900"/><path d="M1.500,15 L16,1.500" stroke="#1a3a90" stroke-width="1"/><path d="M3,3 v4 M5,3.500 h2.500 v1.500 h-2 v1.500 h2.500" stroke="#111" stroke-width="0.900" fill="none"/><path d="M8,9 c2,0 2,2 0.500,2.500 c2,0 2,2.500 -0.500,2.500 M11.500,11 l3,3 m0,-3 l-3,3" stroke="#111" stroke-width="0.900" fill="none"/><rect x="15" y="14.500" width="2" height="2" fill="#1a3a90"/></svg>
<div class="t" style="left:1591px;top:123px;font-size:18px;line-height:19px;color:#222;letter-spacing:-0.500px;-webkit-text-stroke:0.4px #222;transform:scaleX(0.9);transform-origin:0 0;">d=</div>
<svg class="abs" style="left:1635px;top:71px" width="35" height="34" viewBox="0 0 35 34"><path d="M1.500,1.500 H17 L26.500,11 V32.500 H1.500 Z" fill="#fdfdfd" stroke="#555" stroke-width="1.100"/><path d="M17,1.500 V11 H26.500" fill="none" stroke="#555" stroke-width="1"/><g fill="#d81818"><rect x="5" y="9.500" width="1.800" height="1.800"/><rect x="5" y="14" width="1.800" height="1.800"/><rect x="5" y="25.500" width="1.800" height="1.800"/></g><path d="M9,10.500 H14 M9,15 H20 M13,19 H20 M13,23 H20 M9,26.500 H20" stroke="#222" stroke-width="1.100"/><rect x="22.500" y="0.800" width="11" height="16" rx="4.500" fill="#1a6ae8"/><path d="M27,5 h1.800 M26.200,8 h2.600 v5 M26.200,13 h4.500" stroke="#fff" stroke-width="1.600" fill="none"/></svg>
<div class="t c" style="left:1652px;top:111.0px;">Stückliste</div>
<svg class="abs" style="left:1698px;top:71px" width="36" height="34" viewBox="0 0 36 34"><g fill="none" stroke="#555" stroke-width="1.800"><ellipse cx="8.500" cy="27" rx="5.500" ry="3.200" transform="rotate(-40 8.500 27)"/><ellipse cx="14" cy="21" rx="5.500" ry="3.200" transform="rotate(-50 14 21)"/><ellipse cx="19.500" cy="15" rx="5.500" ry="3.200" transform="rotate(-40 19.500 15)"/><ellipse cx="25" cy="9" rx="5.500" ry="3.200" transform="rotate(-50 25 9)"/></g><path d="M2,32 L6,28.500" stroke="#555" stroke-width="1.500"/><rect x="23.500" y="0.800" width="11" height="16" rx="4.500" fill="#1a6ae8"/><path d="M28,5 h1.800 M27.200,8 h2.600 v5 M27.200,13 h4.500" stroke="#fff" stroke-width="1.600" fill="none"/></svg>
<div class="t c n" style="left:1716.5px;top:111.0px;">Referenz-</div>
<div class="t c" style="left:1716.5px;top:127.0px;">Viewer</div>
<!-- /RIBBON-CONTENT -->
<!-- LEFT-PANEL -->
<div class="abs" style="left:4px;top:175px;width:309px;height:863px;background:#fbfbfc;"></div>
<!-- tabs -->
<div class="abs" style="left:37px;top:189px;width:61px;height:28px;background:#ececee;border:1px solid #d4d4d8;border-bottom:none;box-sizing:border-box;"></div>
<div class="abs" style="left:67px;top:189px;width:1px;height:28px;background:#d4d4d8;"></div>
<div class="abs" style="left:8px;top:217px;width:301px;height:809px;border:1px solid #c9c9cd;border-right:3px solid #c9c9cb;box-sizing:border-box;background:#fbfbfc;"></div>
<div class="abs" style="left:8px;top:188px;width:30px;height:30px;background:#fbfbfc;border:1px solid #d4d4d8;border-bottom:none;box-sizing:border-box;"></div>
<svg class="abs" style="left:15px;top:193px" width="18" height="20" viewBox="0 0 18 20"><g fill="#fff" stroke="#3a3a3a" stroke-width="1"><path d="M4.5,4 V16 M4.5,10 H12" fill="none"/><rect x="2.5" y="1.5" width="4" height="4"/><rect x="2.5" y="8" width="4" height="4"/><rect x="2.5" y="14.5" width="4" height="4"/><rect x="10.5" y="8" width="4" height="4"/></g></svg>
<svg class="abs" style="left:43px;top:193px" width="20" height="20" viewBox="0 0 20 20"><g fill="#ffe760" stroke="#6e6a3a" stroke-width="0.9"><path d="M1.5,3.5 h3 l1,-1.5 h3 v2 h3 v6 h-10 z"/><path d="M4.500,7.5 h3 l1,-1.500 h3 v2 h3 v6 h-10 z"/><path d="M7.500,11.500 h3 l1,-1.500 h3 v2 h3 v6 h-10 z"/></g></svg>
<svg class="abs" style="left:73px;top:194px" width="20" height="19" viewBox="0 0 20 19"><path d="M1.500,4.500 h4 l1.500,-2 h5 v2 h6.500 v13 h-17 z" fill="#ffe760" stroke="#6e6a3a" stroke-width="0.9"/><rect x="1.500" y="6" width="17" height="11.500" fill="#fff04a" stroke="#6e6a3a" stroke-width="0.9"/><g stroke="#1a1ad0" stroke-width="1.100"><path d="M10,8.500 v7 M6.500,12 h7 M7.500,9.500 l5,5 M12.500,9.500 l-5,5"/></g></svg>
<div class="t" style="left:29px;top:225px;font-weight:bold;font-size:13.5px;letter-spacing:0.2px;color:#45454f;">Modellbaum</div>
<!-- header icons -->
<svg class="abs" style="left:226px;top:222px" width="22" height="22" viewBox="0 0 22 22"><path d="M2.500,6 C4,3 8,2.500 11,5 L9.500,7 L6,6.500 Z" fill="#777" stroke="#444" stroke-width="0.7"/><rect x="7" y="7" width="3" height="12" fill="#e0702a" stroke="#7a3a10" stroke-width="0.6"/><path d="M13,2 L13,6 L15,7.500 L17,6 L17,2 L19,4 L19,8 L17,9.500 V19 H13.500 V9.500 L11.500,8 V4 Z" fill="#5c8fd6" stroke="#2a4a80" stroke-width="0.6"/></svg>
<span class="da" style="left:254px;top:231px;margin:0;border-top-color:#33333f"></span>
<svg class="abs" style="left:269px;top:222px" width="20" height="22" viewBox="0 0 20 22"><path d="M2.500,1.500 H13 L17.500,6 V20.500 H2.500 Z" fill="#fff" stroke="#555" stroke-width="1"/><path d="M13,1.500 V6 H17.500" fill="none" stroke="#555" stroke-width="1"/><g stroke="#555" stroke-width="1"><circle cx="6" cy="8" r="1.200" fill="none"/><circle cx="6" cy="12" r="1.200" fill="none"/><circle cx="6" cy="16" r="1.200" fill="none"/><path d="M9,8 H15 M9,12 H15 M9,16 H15"/></g></svg>
<span class="da" style="left:295px;top:231px;margin:0;border-top-color:#33333f"></span>
<!-- search -->
<div class="abs" style="left:8px;top:246px;width:202px;height:30px;border:1px solid #c6c6ca;box-sizing:border-box;background:#fdfdfd;"></div>
<div class="t" style="left:188px;top:250px;font-size:15px;color:#66666c;">×</div>
<span class="da" style="left:216px;top:260px;margin:0;border-top-color:#33333f"></span>
<svg class="abs" style="left:233px;top:252px" width="18" height="18" viewBox="0 0 18 18"><g fill="#2c2c30"><rect x="2" y="2" width="4" height="4" rx="0.500"/><rect x="12" y="2" width="4" height="4" rx="0.500"/><rect x="1" y="5" width="6" height="11" rx="1.200"/><rect x="11" y="5" width="6" height="11" rx="1.200"/><rect x="6.500" y="5" width="5" height="5"/></g><rect x="2.200" y="7" width="1.300" height="7" fill="#aaa"/><rect x="12.200" y="7" width="1.300" height="7" fill="#aaa"/></svg>
<svg class="abs" style="left:260px;top:253px" width="18" height="18" viewBox="0 0 18 18"><path d="M1.500,2.500 H16.500 L10.500,9.500 V16 L7.500,14.500 V9.500 Z" fill="#e6e6e8" stroke="#a4a4a8" stroke-width="1.100"/></svg>
<svg class="abs" style="left:287px;top:254px" width="14" height="14" viewBox="0 0 14 14"><path d="M7,1.500 V12.500 M1.500,7 H12.500" stroke="#a0a0a4" stroke-width="2.600"/></svg>
<div class="abs" style="left:9px;top:280px;width:297px;height:1px;background:#dadade;"></div>

<svg class="abs" style="left:13px;top:282.5px" width="16" height="16" viewBox="0 0 16 16"><path d="M1.5,2.5 L3,1 L14.5,1 L14.5,12.5 L12.5,14.5 L1.5,14.5 Z" fill="#ffe760" stroke="#b07d12" stroke-width="1"/><path d="M5.5,1.5 L14,1.5 L14,10.5 L5.5,10.5 Z" fill="#7fe9ea"/><path d="M12.2,1.5 L14,1.5 L14,10.5 L12.2,10.5 Z" fill="#35a8aa"/><path d="M5,1.5 L5,11 L14,11" fill="none" stroke="#8a6a10" stroke-width="1"/></svg>
<div class="tr" style="left:32px;top:281.5px;">WINKELBOHRVORSATZ_1_A1.ASM</div>
<span class="arr" style="left:19px;top:304.0px"></span>
<svg class="abs" style="left:32px;top:300.5px" width="17" height="16" viewBox="0 0 17 16"><path d="M1,5 L3,3 H10 L8,5 V10 H1 Z" fill="#7fe9ea" stroke="#2a4a55" stroke-width="0.9"/><circle cx="12" cy="5" r="3.800" fill="#9cc4ff" stroke="#2a50b0" stroke-width="0.9"/><path d="M5,12.500 L8.500,6.500 L12.500,12.500 C11,15 6.500,15 5,12.500 Z" fill="#e8d84a" stroke="#5a4a00" stroke-width="0.9"/></svg>
<div class="tr" style="left:52px;top:299.5px;">Gruppe ORIGIN</div>
<span class="arr" style="left:19px;top:322.0px"></span>
<svg class="abs" style="left:33px;top:318.5px" width="16" height="16" viewBox="0 0 16 16"><path d="M1.5,2.5 L3,1 L14.5,1 L14.5,12.5 L12.5,14.5 L1.5,14.5 Z" fill="#ffe760" stroke="#b07d12" stroke-width="1"/><path d="M5.5,1.5 L14,1.5 L14,10.5 L5.5,10.5 Z" fill="#7fe9ea"/><path d="M12.2,1.5 L14,1.5 L14,10.5 L12.2,10.5 Z" fill="#35a8aa"/><path d="M5,1.5 L5,11 L14,11" fill="none" stroke="#8a6a10" stroke-width="1"/></svg>
<div class="tr" style="left:52px;top:317.5px;">ANTRIEBSRAD_1_A1.ASM</div>
<span class="arr" style="left:19px;top:340.0px"></span>
<svg class="abs" style="left:33px;top:336.5px" width="16" height="16" viewBox="0 0 16 16"><path d="M1.5,2.5 L3,1 L14.5,1 L14.5,12.5 L12.5,14.5 L1.5,14.5 Z" fill="#ffe760" stroke="#b07d12" stroke-width="1"/><path d="M5.5,1.5 L14,1.5 L14,10.5 L5.5,10.5 Z" fill="#7fe9ea"/><path d="M12.2,1.5 L14,1.5 L14,10.5 L12.2,10.5 Z" fill="#35a8aa"/><path d="M5,1.5 L5,11 L14,11" fill="none" stroke="#8a6a10" stroke-width="1"/></svg>
<div class="tr" style="left:52px;top:335.5px;">ABTRIEBSRAD_1_A1.ASM</div>
<span class="arr" style="left:19px;top:358.0px"></span>
<svg class="abs" style="left:33px;top:354.5px" width="16" height="16" viewBox="0 0 16 16"><path d="M2,3.5 L4,1.5 L14,1.5 L14,12 L12,14 L2,14 Z" fill="#7ceaea" stroke="#3f4a55" stroke-width="1"/><path d="M12,3.5 L14,1.5 L14,12 L12,14 Z" fill="#2c9b9d"/><path d="M2,3.5 L12,3.5 L12,14" fill="none" stroke="#d8ffff" stroke-width="0.8"/></svg>
<div class="tr" style="left:52px;top:353.5px;">GEHAEUSE-HAELFTE_1_A3.PRT</div>
<span class="arr" style="left:19px;top:376.0px"></span>
<svg class="abs" style="left:33px;top:372.5px" width="16" height="16" viewBox="0 0 16 16"><path d="M2,3.5 L4,1.5 L14,1.5 L14,12 L12,14 L2,14 Z" fill="#7ceaea" stroke="#3f4a55" stroke-width="1"/><path d="M12,3.5 L14,1.5 L14,12 L12,14 Z" fill="#2c9b9d"/><path d="M2,3.5 L12,3.5 L12,14" fill="none" stroke="#d8ffff" stroke-width="0.8"/></svg>
<div class="tr" style="left:52px;top:371.5px;">GEHAEUSE-HAELFTE_2_A1.PRT</div>
<span class="arr" style="left:19px;top:394.0px"></span>
<svg class="abs" style="left:33px;top:390.5px" width="16" height="16" viewBox="0 0 16 16"><path d="M2,3.5 L4,1.5 L14,1.5 L14,12 L12,14 L2,14 Z" fill="#7ceaea" stroke="#3f4a55" stroke-width="1"/><path d="M12,3.5 L14,1.5 L14,12 L12,14 Z" fill="#2c9b9d"/><path d="M2,3.5 L12,3.5 L12,14" fill="none" stroke="#d8ffff" stroke-width="0.8"/></svg>
<div class="tr" style="left:52px;top:389.5px;">BLECHSCHRAUBE_KS_3D9.PRT</div>
<span class="arr" style="left:19px;top:412.0px"></span>
<svg class="abs" style="left:33px;top:408.5px" width="16" height="16" viewBox="0 0 16 16"><path d="M2,3.5 L4,1.5 L14,1.5 L14,12 L12,14 L2,14 Z" fill="#7ceaea" stroke="#3f4a55" stroke-width="1"/><path d="M12,3.5 L14,1.5 L14,12 L12,14 Z" fill="#2c9b9d"/><path d="M2,3.5 L12,3.5 L12,14" fill="none" stroke="#d8ffff" stroke-width="0.8"/></svg>
<div class="tr" style="left:52px;top:407.5px;">BLECHSCHRAUBE_KS_3D9.PRT</div>
<span class="arr" style="left:19px;top:430.0px"></span>
<svg class="abs" style="left:33px;top:426.5px" width="16" height="16" viewBox="0 0 16 16"><path d="M2,3.5 L4,1.5 L14,1.5 L14,12 L12,14 L2,14 Z" fill="#7ceaea" stroke="#3f4a55" stroke-width="1"/><path d="M12,3.5 L14,1.5 L14,12 L12,14 Z" fill="#2c9b9d"/><path d="M2,3.5 L12,3.5 L12,14" fill="none" stroke="#d8ffff" stroke-width="0.8"/></svg>
<div class="tr" style="left:52px;top:425.5px;">BLECHSCHRAUBE_KS_3D9.PRT</div>
<span class="arr" style="left:19px;top:448.0px"></span>
<svg class="abs" style="left:33px;top:444.5px" width="16" height="16" viewBox="0 0 16 16"><path d="M2,3.5 L4,1.5 L14,1.5 L14,12 L12,14 L2,14 Z" fill="#7ceaea" stroke="#3f4a55" stroke-width="1"/><path d="M12,3.5 L14,1.5 L14,12 L12,14 Z" fill="#2c9b9d"/><path d="M2,3.5 L12,3.5 L12,14" fill="none" stroke="#d8ffff" stroke-width="0.8"/></svg>
<div class="tr" style="left:52px;top:443.5px;">BLECHSCHRAUBE_KS_3D9.PRT</div>
<span class="arr" style="left:19px;top:466.0px"></span>
<svg class="abs" style="left:33px;top:462.5px" width="16" height="16" viewBox="0 0 16 16"><path d="M2,3.5 L4,1.5 L14,1.5 L14,12 L12,14 L2,14 Z" fill="#7ceaea" stroke="#3f4a55" stroke-width="1"/><path d="M12,3.5 L14,1.5 L14,12 L12,14 Z" fill="#2c9b9d"/><path d="M2,3.5 L12,3.5 L12,14" fill="none" stroke="#d8ffff" stroke-width="0.8"/></svg>
<div class="tr" style="left:52px;top:461.5px;">BLECHSCHRAUBE_KS_3D9.PRT</div>
<span class="arr" style="left:19px;top:484.0px"></span>
<svg class="abs" style="left:33px;top:480.5px" width="16" height="16" viewBox="0 0 16 16"><path d="M1.5,2.5 L3,1 L14.5,1 L14.5,12.5 L12.5,14.5 L1.5,14.5 Z" fill="#ffe760" stroke="#b07d12" stroke-width="1"/><path d="M5.5,1.5 L14,1.5 L14,10.5 L5.5,10.5 Z" fill="#7fe9ea"/><path d="M12.2,1.5 L14,1.5 L14,10.5 L12.2,10.5 Z" fill="#35a8aa"/><path d="M5,1.5 L5,11 L14,11" fill="none" stroke="#8a6a10" stroke-width="1"/></svg>
<div class="tr" style="left:52px;top:479.5px;">BOHRFUTTER_1_A1.ASM</div>
<span class="arr" style="left:19px;top:502.0px"></span>
<svg class="abs" style="left:33px;top:498.5px" width="16" height="16" viewBox="0 0 16 16"><path d="M2,3.5 L4,1.5 L14,1.5 L14,12 L12,14 L2,14 Z" fill="#7ceaea" stroke="#3f4a55" stroke-width="1"/><path d="M12,3.5 L14,1.5 L14,12 L12,14 Z" fill="#2c9b9d"/><path d="M2,3.5 L12,3.5 L12,14" fill="none" stroke="#d8ffff" stroke-width="0.8"/></svg>
<div class="tr" style="left:53px;top:497.5px;">SENKSCHRB_INNENSKT_M5_X_16.PRT</div>
<span class="arr" style="left:19px;top:520.0px"></span>
<svg class="abs" style="left:33px;top:516.5px" width="16" height="16" viewBox="0 0 16 16"><path d="M1.5,2.5 L3,1 L14.5,1 L14.5,12.5 L12.5,14.5 L1.5,14.5 Z" fill="#ffe760" stroke="#b07d12" stroke-width="1"/><path d="M5.5,1.5 L14,1.5 L14,10.5 L5.5,10.5 Z" fill="#7fe9ea"/><path d="M12.2,1.5 L14,1.5 L14,10.5 L12.2,10.5 Z" fill="#35a8aa"/><path d="M5,1.5 L5,11 L14,11" fill="none" stroke="#8a6a10" stroke-width="1"/></svg>
<div class="tr" style="left:52px;top:515.5px;">HANDGRIFF_1_A1.ASM</div>
<span class="arr" style="left:19px;top:538.0px"></span>
<svg class="abs" style="left:33px;top:534.5px" width="16" height="16" viewBox="0 0 16 16"><path d="M1.5,2.5 L3,1 L14.5,1 L14.5,12.5 L12.5,14.5 L1.5,14.5 Z" fill="#ffe760" stroke="#b07d12" stroke-width="1"/><path d="M5.5,1.5 L14,1.5 L14,10.5 L5.5,10.5 Z" fill="#7fe9ea"/><path d="M12.2,1.5 L14,1.5 L14,10.5 L12.2,10.5 Z" fill="#35a8aa"/><path d="M5,1.5 L5,11 L14,11" fill="none" stroke="#8a6a10" stroke-width="1"/></svg>
<span class="abs" style="left:51px;top:536.5px;width:3px;height:4px;background:#222;"></span>
<div class="tr" style="left:57px;top:533.5px;">HANDGRIFF_1_A1.ASM</div>
<svg class="abs" style="left:34px;top:554.5px" width="14" height="12" viewBox="0 0 14 12"><path d="M1,4.500 H7 V1 L13,6 L7,11 V7.500 H1 Z" fill="#e01818" stroke="#7a0c0c" stroke-width="0.700"/></svg>
<div class="tr" style="left:52px;top:551.5px;">Hier einfügen</div>
<span class="abs" style="left:17px;top:575.5px;width:0;height:0;border-left:4.500px solid transparent;border-right:4.500px solid transparent;border-top:6px solid #77777d;"></span>
<svg class="abs" style="left:33px;top:570.5px" width="16" height="16" viewBox="0 0 16 16"><path d="M1.5,5 L6,1.5 L6,11 L1.5,14.5 Z" fill="#ffe98a" stroke="#9a8a40" stroke-width="0.8"/><path d="M6,1.5 L14.5,1.5 L14.5,9 L6,14 L2,14.3 L6,11 Z" fill="#bfe2f5" stroke="#6a8aa8" stroke-width="0.8"/></svg>
<div class="tr" style="left:53px;top:569.5px;">Schnitte</div>
<svg class="abs" style="left:53px;top:588.5px" width="16" height="16" viewBox="0 0 16 16"><path d="M1.5,5 L6,1.5 L6,11 L1.5,14.5 Z" fill="#ffe98a" stroke="#9a8a40" stroke-width="0.8"/><path d="M6,1.5 L14.5,1.5 L14.5,9 L6,14 L2,14.3 L6,11 Z" fill="#bfe2f5" stroke="#6a8aa8" stroke-width="0.8"/></svg>
<svg class="abs" style="left:58px;top:595.5px" width="9" height="9" viewBox="0 0 9 9"><path d="M4.500,0.500 L8.500,4.500 L4.500,8.500 L0.500,4.500 Z" fill="#22c022" stroke="#0a6a0a" stroke-width="0.800"/><rect x="3.500" y="3.500" width="2" height="2" fill="#fff"/></svg>
<div class="tr" style="left:71px;top:587.5px;">A</div>
<svg class="abs" style="left:53px;top:606.5px" width="16" height="16" viewBox="0 0 16 16"><path d="M1.5,5 L6,1.5 L6,11 L1.5,14.5 Z" fill="#ffe98a" stroke="#9a8a40" stroke-width="0.8"/><path d="M6,1.5 L14.5,1.5 L14.5,9 L6,14 L2,14.3 L6,11 Z" fill="#bfe2f5" stroke="#6a8aa8" stroke-width="0.8"/></svg>
<div class="tr" style="left:71px;top:605.5px;">B</div>
<svg class="abs" style="left:53px;top:624.5px" width="16" height="16" viewBox="0 0 16 16"><path d="M1.5,5 L6,1.5 L6,11 L1.5,14.5 Z" fill="#ffe98a" stroke="#9a8a40" stroke-width="0.8"/><path d="M6,1.5 L14.5,1.5 L14.5,9 L6,14 L2,14.3 L6,11 Z" fill="#bfe2f5" stroke="#6a8aa8" stroke-width="0.8"/></svg>
<div class="tr" style="left:71px;top:623.5px;">C</div>
<!-- /LEFT-PANEL -->
<!-- VIEWPORT -->
<div class="abs" id="vp" style="left:313px;top:175px;width:1449px;height:863px;background:#162b44;overflow:hidden;">
<!-- MODEL-SVG --><svg style="position:absolute;left:0;top:0" width="1449" height="863" viewBox="313 175 1449 863">
<defs>
<linearGradient id="gcyl" gradientUnits="userSpaceOnUse" x1="1080" y1="328" x2="970" y2="423">
<stop offset="0" stop-color="#434343"/><stop offset="0.12" stop-color="#494949"/><stop offset="0.45" stop-color="#4f4f4f"/><stop offset="0.75" stop-color="#4b4b4b"/><stop offset="0.9" stop-color="#414141"/><stop offset="1" stop-color="#333333"/>
</linearGradient>
<linearGradient id="gcap" gradientUnits="userSpaceOnUse" x1="930" y1="200" x2="820" y2="330">
<stop offset="0" stop-color="#353535"/><stop offset="0.4" stop-color="#484848"/><stop offset="1" stop-color="#303030"/>
</linearGradient>
<pattern id="knurl" width="4" height="4" patternUnits="userSpaceOnUse" patternTransform="rotate(32.4)">
<rect width="4" height="4" fill="#4a4a4a"/><rect width="4" height="1.6" fill="#2a2a2a"/>
</pattern>
<linearGradient id="gredin" gradientUnits="userSpaceOnUse" x1="1330" y1="465" x2="1350" y2="640">
<stop offset="0" stop-color="#b03a3c"/><stop offset="0.2" stop-color="#9c3335"/><stop offset="0.6" stop-color="#b43d3f"/><stop offset="1" stop-color="#cc4849"/>
</linearGradient>
<linearGradient id="gchuck" gradientUnits="userSpaceOnUse" x1="700" y1="690" x2="760" y2="830">
<stop offset="0" stop-color="#a5a199"/><stop offset="0.5" stop-color="#8e8a83"/><stop offset="1" stop-color="#6f6c66"/>
</linearGradient>
<pattern id="kn2" width="3.2" height="3.2" patternUnits="userSpaceOnUse" patternTransform="rotate(20)"><rect width="3.2" height="3.2" fill="#35342f"/><path d="M0.4,2.6 L1.6,0.8 L2.8,2.6 Z" fill="#a09c94"/></pattern>
</defs>
<g stroke-linejoin="round">
<!-- CYLINDER -->
<path d="M958,232 L1200,426 C1185,440 1130,470 1079,487 L864,358 C856,340 853,322 856,302 C860,285 870,268 882,256 C892,246 906,236 923,231 C935,229 948,230 958,232 Z" fill="url(#gcyl)"/>
<path d="M897,193 C880,194 858,206 844,218 C830,232 814,262 808,287 C806,300 808,318 823,335 C834,346 848,355 864,358 C856,340 853,322 856,302 C860,285 870,268 882,256 C892,246 906,236 923,231 C935,229 948,230 958,232 C954,222 948,214 943,210 C932,200 915,193 897,193 Z" fill="#4b4b4b"/><path d="M956.6,231.0L956.6,231.7 M954.9,227.6L955.2,231.5 M953.1,224.3L953.6,231.2 M951.1,221.2L952.0,231.0 M948.8,218.1L950.2,230.7 M946.4,215.3L948.4,230.5 M943.6,212.7L946.3,230.3 M940.8,210.2L944.3,230.2 M937.8,207.9L942.2,230.0 M934.7,205.9L940.0,230.0 M931.5,203.9L937.8,229.9 M928.1,202.2L935.5,229.9 M924.7,200.7L933.2,230.0 M921.2,199.4L930.9,230.1 M917.7,198.2L928.5,230.3 M914.0,197.2L926.2,230.5 M910.4,196.4L923.8,230.9 M906.7,195.9L921.5,231.4 M903.0,195.5L919.3,232.2 M899.2,195.3L917.1,233.0 M895.5,195.5L914.8,233.9 M891.8,196.0L912.5,234.9 M888.2,196.8L910.2,235.9 M884.6,197.9L907.9,237.0 M881.0,199.1L905.7,238.2 M877.5,200.4L903.5,239.4 M874.1,201.9L901.3,240.7 M870.7,203.4L899.2,242.1 M867.4,205.1L897.1,243.5 M864.1,206.9L895.0,244.9 M860.9,208.8L893.0,246.4 M857.8,210.8L891.0,247.9 M854.7,212.9L889.1,249.5 M851.6,215.1L887.2,251.1 M848.7,217.4L885.3,252.8 M845.8,219.7L883.5,254.5 M843.2,222.5L881.7,256.3 M840.8,225.3L880.0,258.1 M838.5,228.2L878.3,260.0 M836.3,231.2L876.6,261.9 M834.2,234.3L875.0,263.8 M832.2,237.5L873.5,265.8 M830.2,240.6L871.9,267.9 M828.3,243.9L870.5,270.0 M826.5,247.1L869.1,272.1 M824.8,250.4L867.7,274.2 M823.1,253.7L866.4,276.4 M821.5,257.1L865.1,278.7 M819.9,260.5L863.9,280.9 M818.4,263.9L862.8,283.2 M817.0,267.4L861.7,285.6 M815.6,270.9L860.6,287.9 M814.4,274.4L859.7,290.3 M813.2,277.9L858.8,292.7 M812.1,281.5L857.9,295.2 M811.1,285.1L857.2,297.6 M810.3,288.7L856.5,300.1 M809.9,292.4L855.9,302.6 M809.8,296.1L855.6,305.2 M810.0,299.9L855.3,307.7 M810.4,303.6L855.1,310.2 M811.0,307.3L855.0,312.8 M811.9,310.9L854.9,315.2 M813.1,314.4L854.9,317.7 M814.5,317.9L854.9,320.2 M816.1,321.3L855.0,322.6 M817.9,324.6L855.2,324.9 M819.9,327.7L855.4,327.3 M822.1,330.8L855.7,329.6 M824.5,333.7L856.1,331.9 M827.1,336.4L856.4,334.1 M829.9,338.9L856.9,336.2 M832.7,341.3L857.3,338.4 M835.7,343.6L857.8,340.5 M838.8,345.7L858.4,342.6 M841.9,347.8L859.0,344.6 M845.2,349.6L859.6,346.7 M848.5,351.4L860.3,348.7 M852.0,352.9L861.0,350.7 M855.5,354.3L861.8,352.6 M859.0,355.5L862.5,354.5 M862.7,356.5L863.3,356.3" stroke="#2a2a2a" stroke-width="1.3" fill="none"/>
<path d="M897,193 C880,194 858,206 844,218 C830,232 814,262 808,287 C806,300 808,318 823,335 C834,346 848,355 864,358" fill="none" stroke="#525252" stroke-width="2.5"/>
<!-- RED-HOUSING -->
<path id="redout" d="M948.9,593.3 C950,585 953,577.8 973,561 L1013,533 L1046.7,508.9 L1093,482 L1140,457.8 L1184,441 C1200,433 1225,428 1246.5,426.7 C1260,426.5 1272,428 1284.6,430.6 C1300,433 1312,436 1322.8,440.7 C1338,447 1350,455 1361,463.7 C1373,473 1383,483 1391.6,494.2 C1400,504 1407,515 1412,527.3 C1418,540 1421,552 1423.4,565.5 C1425,578 1425.5,591 1424.7,603.7 C1424,616 1422,628 1419.6,640 L1412,670.6 L1396.7,716.4 L1381.4,754.6 C1377,764 1372,773 1366,780 C1361,786 1355,791 1348.3,795.3 L1328,805.5 L1320,830 L1246.5,843.7 C1240,845.5 1234,846.5 1228.6,846.3 C1221,846 1214,844 1208.3,841.2 C1202,837.5 1197,833 1193,828.4 L1172.6,803 L1152.2,772.4 L1137,752 C1133,746 1130,742.5 1126.7,741 C1122,739 1117,738.5 1111,738.9 L1073,746.7 L1028.9,753 C1018,754 1010,754 1002,752 C994,749.5 988,745 984.4,740 C980,734 978,728 976.7,721 L960,660 Z" fill="#a23637"/>
<!-- lit upper-left band -->
<path d="M948.9,593.3 C950,585 953,577.8 973,561 L1013,533 L1046.7,508.9 L1093,482 L1140,457.8 L1184,441 C1200,433 1225,428 1246.5,426.7 C1260,426.5 1272,428 1284.6,430.6 C1295,432.5 1303,434.5 1312,438.5 C1302,437.5 1293,438 1284.6,438.5 C1268,437 1255,441 1240,446.7 L1206.7,460 L1162,480 L1117.8,504.4 L1073,531 L1029,560 C1015,568 1004,575 997.8,582 C991,589 987,594 984.4,600 C981,608 979,618 978.9,628.9 L968,629 L957.8,624 L951,613 Z" fill="#e84f50"/>
<!-- cavity -->
<path d="M1218.4,473.8 L1259,461 C1272,459 1285,459 1297.4,459.8 C1309,461 1320,464 1330.5,468.8 C1342,474 1352,481 1361,489 C1371,498 1380,509 1386.5,522 C1393,534 1397,546 1399,558 C1401.5,570 1402.5,582 1401.8,593.5 C1401,602 1399,610 1396.7,616.5 C1394,623 1391,627 1386.5,629 L1338,649.5 L1230,690 L1221,603 Z" fill="url(#gredin)"/>
<path d="M1218.4,473.8 L1279.6,471.3 L1287.2,481.5 L1266.8,512 L1221,532.4 Z" fill="#e84f50"/>
<path d="M1344.4,615.6 L1353.3,605.6 L1386.7,617.8 L1390,625 L1340,645 L1338,634 Z" fill="#e84f50"/>
<path d="M1332,479 C1350,486 1368,503 1380,524 C1390,543 1395,565 1395,590 C1395,603 1392,613 1387,618" fill="none" stroke="#5a1f22" stroke-width="0.9"/>
<path d="M1336,476 C1354,484 1373,501 1385,522 C1395,542 1400,565 1399.500,590 C1399,605 1396,616 1390,622" fill="none" stroke="#5a1f22" stroke-width="0.9"/>
<!-- web plate -->
<path d="M1221,532.4 L1266.8,512 L1287.2,481.5 C1291,476 1295,473 1300,471.3 C1308,468.5 1316,468 1322.8,468.8 C1329,470 1332,474 1331.8,479 C1332,485 1330,491 1328,496.8 L1307.6,532.4 L1308.8,578.3 L1301.2,593.5 L1297.4,578.3 L1241.4,601.2 L1223.5,603.7 Z" fill="#a83a3b" stroke="#5a2020" stroke-width="0.8"/>
<ellipse cx="1269" cy="549" rx="16.5" ry="17" fill="#a83a3b" stroke="#5a2020" stroke-width="0.9" transform="rotate(25 1269 549)"/>
<ellipse cx="1271" cy="548" rx="13" ry="14" fill="#b94042" stroke="#5a2020" stroke-width="0.7" transform="rotate(25 1271 548)"/>

<!-- CHUCK -->
<!-- outer light body -->
<path d="M741.8,695 L735,681.5 L693.3,696.5 C684,699 677,703 671,706.7 C664,712 659,718 655.6,724.4 C651,733 649,742 647.8,751 L646.7,769 C647,785 650,800 655,812 L642,822 L648.9,836.7 L671,838 L683.3,854.4 L708.9,869.3 L811,853 L959,790 L952,750 L975,731 L971,640 L951.5,630 L950.2,589.2 L943.7,584.6 C936,578 928,575 919.1,574.3 L899.6,576.9 L873.7,585.9 L834.8,602.8 L801.8,618.3 L800,650 L790,690 Z" fill="url(#gchuck)"/>
<path d="M808,715 C800,725 780,745 760,755 L700,790 L655,812 L651,824.4 L765.6,784.4 L865.6,773.3 L886.7,768.9 L827.8,770 Z" fill="#8f8b84"/>
<path d="M864,773 L886.7,768.9 L955,740 L959,790 L864,831 Z" fill="#a29e96"/>
<path d="M920,752 L955,740 L959,790 L925,805 Z" fill="#7e7b75"/>
<!-- inner dark cylinder face -->
<path d="M808.9,715.6 L826.7,708.9 L830,768.9 L820,775.6 C813,770 809,760 808,748 Z" fill="#474541"/>
<path d="M827.8,729 L838.9,725.6 L844.4,733.3 L828.9,751 Z" fill="#3b3a37"/>
<!-- drill bit -->
<path d="M634.4,793 L639,788 L669,766 L700,760 L760,736 L790,722 L808,716 L770,750 L705,790 L650,812 L636.7,807.8 Z" fill="#8b8781"/>
<path d="M646,797 L700,772 L770,738 L800,722 L762,752 L700,786 L650,807 Z" fill="#2f2f2d"/><path d="M640,792 L668,771 L700,766 L660,786 Z" fill="#b5b1a9"/>
<path d="M634.4,793 L639,789 L644,808 L636.7,807.8 Z" fill="#5a5853"/>
<!-- knurl ring -->
<path d="M829.6,609.9 L871.1,587.9 L902.2,601.5 L850.4,620.9 Z" fill="#6b6964"/>
<path d="M801.8,618.3 L829.6,609.9 L850.4,620.9 L832.2,630.7 L812.8,622.2 Z" fill="url(#kn2)"/>
<path d="M871.1,587.9 L894.4,579.4 L924.3,591.1 L902.2,601.5 Z" fill="url(#kn2)"/>
<!-- sleeve interior -->
<path d="M850.4,627.4 L947,590.5 L947,630.6 L928.8,639.7 L880.2,664.4 L866,640.4 Z" fill="#5b5853"/>
<path d="M877.6,652 L905,642 C912,630 925,625 938,626 L947,630.6 L928.8,639.7 L880.2,664.4 Z" fill="#9c9890"/>
<path d="M845.8,668.9 L845.8,672.8 L804.4,697.4 L804.4,685.7 Z" fill="#a8a49c"/>
<!-- BODY -->
<path d="M741.8,695.1 L748.9,693.3 L751.1,722.2 L784.4,707.1 L783.3,686.7 L802.2,682.2 L804.4,698.9 L845.6,672 L846.7,648 L863.3,641.7 L880.2,664.4 L969.6,628.7 L971,640 L976,718 L974.4,730 L886.7,768.9 L827.8,770 L828.9,751 L844.4,733.3 L838.9,725.6 L827.8,729 L826.7,708.9 L680,770.7 L679.6,746.7 L702.2,714.4 Z" fill="#4c4944" stroke="#f4f41c" stroke-width="1.5"/>
<!-- screw -->
<path d="M826.7,708.9 L851,717.8 851.6,719.2 852.6,715.5 855.9,717.4 856.9,713.7 860.3,715.6 861.3,711.9 864.6,713.8 865.6,710.1 868.9,712.0 870.0,708.4 873.3,710.2 874.3,706.6 877.6,708.4 878.6,704.8 882.0,706.7 883.0,703.0 886.3,704.9 887.3,701.2 890.6,703.1 891.7,699.4 895.0,701.3 896.0,697.6 899.3,699.5 900.3,695.8 903.7,697.7 904.7,694.0 908.0,695.9 909.0,692.2 912.3,694.1 913.4,690.5 916.7,692.3 917.7,688.7 921.0,690.5 922.0,686.9 925.4,688.8 926.4,685.1 929.7,687.0 930.7,683.3 934.0,685.2 935.1,681.5 938.4,683.4 L922,687.8 L924.4,709 943.6,703.4 940.3,701.6 939.4,705.2 936.1,703.4 935.2,707.1 931.9,705.3 931.1,709.0 927.8,707.2 926.9,710.8 923.6,709.0 922.7,712.7 919.4,710.9 918.5,714.6 915.2,712.7 914.3,716.4 911.0,714.6 910.2,718.3 906.8,716.5 906.0,720.1 902.7,718.3 901.8,722.0 898.5,720.2 897.6,723.9 894.3,722.1 893.4,725.7 890.1,723.9 889.2,727.6 885.9,725.8 885.1,729.5 881.8,727.7 880.9,731.3 877.6,729.5 876.7,733.2 873.4,731.4 872.5,735.1 869.2,733.2 868.3,736.9 865.0,735.1 864.2,738.8 860.8,737.0 860.0,740.6 856.7,738.8 855.8,742.5 852.5,740.7 851.6,744.4 L851,743 L827.8,770 L828.9,751 L844.4,733.3 L838.9,725.6 L827.8,729 Z" fill="#323130" stroke="#f4f41c" stroke-width="1.2"/>
<path d="M924,684 L936,680 C943,683 946,690 944,698 L943,702 L925.6,709 Z" fill="#a19d95" stroke="#f4f41c" stroke-width="1.2"/>
<polyline points="971.6,652.9 968.3,651.0 967.4,654.6 964.2,652.7 963.2,656.4 960.0,654.5 959.1,658.1 955.8,656.2 954.9,659.9 951.7,658.0 950.7,661.6 947.5,659.7 946.6,663.3 943.3,661.4 942.4,665.1 939.2,663.2 938.2,666.8 935.0,664.9 934.1,668.6 930.8,666.7 929.9,670.3 926.7,668.4 925.7,672.0 922.5,670.1 921.6,673.8 918.3,671.9 917.4,675.5 914.2,673.6 913.2,677.3 910.0,675.4 909.1,679.0 905.8,677.1 904.9,680.8 901.7,678.9 900.7,682.5 897.5,680.6 896.6,684.2 893.3,682.3 892.4,686.0 889.2,684.1 888.2,687.7 885.0,685.8 884.1,689.5 880.8,687.6 879.9,691.2 876.7,689.3 875.7,692.9 872.5,691.0 871.6,694.7" fill="none" stroke="#f4f41c" stroke-width="1.2"/>
<polyline points="975.0,709.9 971.7,708.0 970.7,711.6 967.5,709.7 966.5,713.3 963.3,711.4 962.3,715.0 959.1,713.1 958.1,716.7 954.8,714.8 953.8,718.4 950.6,716.5 949.6,720.1 946.4,718.2 945.4,721.8 942.2,719.9 941.2,723.6 937.9,721.6 936.9,725.3 933.7,723.3 932.7,727.0 929.5,725.0 928.5,728.7 925.3,726.8 924.3,730.4 921.0,728.5 920.0,732.1 916.8,730.2 915.8,733.8 912.6,731.9 911.6,735.5 908.4,733.6 907.4,737.2 904.1,735.3 903.1,738.9 899.9,737.0 898.9,740.6 895.7,738.7 894.7,742.3 891.5,740.4 890.5,744.1 887.2,742.1 886.2,745.8 883.0,743.8 882.0,747.5 878.8,745.5 877.8,749.2 874.6,747.3 873.6,750.9" fill="none" stroke="#f4f41c" stroke-width="1.2"/>
<polyline points="871,693.3 857.8,700 851,717.8" fill="none" stroke="#f4f41c" stroke-width="1.2"/>
<polyline points="873,749.5 862,752 851,743" fill="none" stroke="#f4f41c" stroke-width="1.2"/>
<line x1="871" y1="693.3" x2="873" y2="744" stroke="#f4f41c" stroke-width="1.2"/>
<!-- P6 jaw -->
<path d="M801,644.3 L843.2,630 846.7,671.2 839.7,668.7 836.4,675.4 829.3,672.9 826.0,679.6 819.0,677.1 815.7,683.8 808.6,681.3 805.3,688.0 L801.8,681.2 L786.9,687.7 L786,680 Z" fill="#4c4944" stroke="#f4f41c" stroke-width="1.5"/>
<!-- sleeve shell upper -->
<path d="M807.6,643 L853,626 L904.8,602.8 L946.3,585.9 C949,586 950.2,587.5 950.2,589.2 L951.5,630 L930.7,641.7 L928.8,639 L946.3,630.6 L947,590.5 L904.8,607 L853,630 L808.9,648.1 Z" fill="#4c4944" stroke="#f4f41c" stroke-width="1.2"/>
<!-- lower jaw P2 -->
<path d="M648.9,836.7 L651.1,824.4 L765.6,784.4 L813.3,778.2 L865.6,773.3 859.9,802.0 854.6,798.7 850.5,803.3 845.3,800.1 841.2,804.7 835.9,801.4 831.8,806.1 826.5,802.8 822.4,807.5 817.1,804.2 813.0,808.8 807.8,805.6 803.7,810.2 798.4,806.9 794.3,811.6 789.0,808.3 784.9,812.9 779.7,809.7 775.6,814.3 770.3,811.0 766.2,815.7 760.9,812.4 756.8,817.0 751.6,813.8 747.5,818.4 742.2,815.1 738.1,819.8 L725.6,821.1 L724.4,827.8 Z" fill="#4c4944" stroke="#f4f41c" stroke-width="1.5"/>
<path d="M859.6,800 L864.4,811.1 L852.2,811.1 L806.7,818.9 L737.8,817.8 Z" fill="#8f8b84"/>
<!-- P3 -->
<path d="M683.3,832.2 L683.3,854.4 L708.9,869.3 L792.2,831.1 L792.2,824.4 L806.7,818.9 L724.4,827.8 Z" fill="#4c4944" stroke="#f4f41c" stroke-width="1.5"/>
<!-- P4 -->
<path d="M795.6,827.8 L811.1,853.3 L853.3,832.2 L852.2,811.1 852.3,813.1 846.9,809.4 842.0,813.7 836.7,810.0 831.8,814.3 826.4,810.6 821.5,814.9 816.1,811.2 811.2,815.5 Z" fill="#4c4944" stroke="#f4f41c" stroke-width="1.5"/>
<path d="M780,832 L795.6,827.8 L811.1,853.3 L790,856 Z" fill="#55524d"/>
<!-- sleeve shell lower -->
<path d="M933,754 L955.6,745.6 C958,746 959,748 959.3,751 L961,790 L864,832 L811,854 L810,851 L862,828.5 L957,787 L955.5,750 L934,757 Z" fill="#4c4944" stroke="#f4f41c" stroke-width="1.2"/>

<!-- SHAFTS -->
<!-- seal groove -->
<path d="M1144.4,533 L1143,506.7 C1143.5,502 1146,500 1149,499 L1240,456.5 C1262,448.5 1285,447.5 1305,450.5 C1331,455.5 1354,469 1374,489 C1394,510 1406,535 1411,560 C1415,580 1415,600 1411,619 C1409,628 1406,634 1400,638.5 L1350,659 L1348,652.5 L1392,632 C1397,629 1400,624 1402,616 C1406,600 1406,581 1402,562 C1397,538 1386,516 1367,496 C1348,477 1328,464 1302,459 C1285,456 1264,457 1242,465 L1153,504 C1151,505 1150,506 1150,507.5 L1151,529 Z" fill="#a83a3b" stroke="#f4f41c" stroke-width="1.3"/>
<!-- screw holes -->
<g fill="#5c5200" stroke="#f4f41c" stroke-width="1.5">
<ellipse cx="1112.2" cy="541.8" rx="9.6" ry="10"/>
<ellipse cx="1119.3" cy="696.3" rx="9.6" ry="10"/>
<ellipse cx="1207" cy="751.2" rx="9.6" ry="10"/>
<ellipse cx="1356" cy="689.7" rx="9.6" ry="10"/>
<ellipse cx="1311" cy="495" rx="9" ry="9.5"/>
</g>
<!-- L channel -->
<path d="M1160,676 L1178,660 L1200,672 L1200,705 L1163,729 Z" fill="#e84f50"/>
<path d="M1151,675.6 L1160,675.6 L1163,729 L1212,709 L1212,715.6 L1162,739 C1158,739 1155,737 1154.4,733 Z" fill="#a83a3b" stroke="#f4f41c" stroke-width="1.2"/>
<!-- lit patches lower -->
<path d="M1325,760 L1345,750 L1343,790 L1328,805 Z" fill="#e84f50"/>
<path d="M1209.5,798 L1241,790 L1248,818 L1231,823 Z" fill="#e84f50"/>
<path d="M1002,705 L1066,683 L1071,711 L1010,722 Z" fill="#e84f50"/>
<!-- gray bearing 3D bits -->
<path d="M1151,504 L1198,490 L1171,533 L1152,528 Z" fill="#8a8680"/>
<path d="M1242,600 C1246,592 1262,585 1280,586 C1292,587 1299,592 1301,599 L1254.4,619.6 L1250,624 L1243,615 Z" fill="#6b6965"/>
<path d="M1309,585 L1329,574 C1340,573 1348,577 1352,583 L1348,622 L1318.5,595.6 Z" fill="#474747"/>
<path d="M1309,585 L1329,574 L1337,577 L1318.5,595.6 L1303,601.5 Z" fill="#8a8782"/>
<path d="M1224.5,625 L1240,622 L1236.9,629.4 L1225.2,648.2 Z" fill="#8a8782"/>
<!-- light gray strip above shaft + brown -->
<path d="M971,631 L1002,617.8 L1061,592 L1063,600 L971,638.5 Z" fill="#98948d"/>
<path d="M1020,606 L1058,588 L1061,592 L1024,609 Z" fill="#8a5418"/>
<!-- brown bushings -->
<g fill="#553210" stroke="#f4f41c" stroke-width="1.5">
<path d="M1061,571 L1077.8,563 L1081,575.6 L1170,541 L1170,556.7 L1063,600 Z"/>
<path d="M1066.7,683.3 L1174.4,636.7 L1174.4,653.3 L1087.8,691 L1086.7,704.4 L1071,711 L1066.7,709 Z"/>
<path d="M1225.2,685.8 L1242.7,678.6 L1247.7,791.5 L1218.4,803 L1216,786.4 L1229.9,780 Z"/>
<path d="M1318.5,646.2 L1335.5,639.7 L1340.7,730.4 L1353.4,727.9 L1354.7,745.7 L1324,758.4 Z"/>
</g>
<path d="M1061,571 L1064,566 L1074,561 L1077.8,563 Z" fill="#a8661e"/>
<path d="M1144.4,533 L1151,529 L1170,535.6 L1170,541 L1150,548 Z" fill="#a8661e"/>
<!-- main shaft -->
<path d="M971,638.5 L1170,556.7 L1172,571 L1218.9,551 L1224.4,551 L1224,598.9 L1220.6,602.8 L1174.6,620.9 L1175.6,636.7 L975.6,717.8 Z" fill="#4c4944" stroke="#f4f41c" stroke-width="1.5"/>
<!-- gears -->
<g fill="#393733" stroke="#f4f41c" stroke-width="1.5">
<path d="M1170,535.6 L1200,490 L1216.7,504.4 L1218.9,551 L1172,571 Z"/>
<path d="M1174.6,620.9 L1220.6,602.8 L1225.2,648.2 L1210.3,677.3 L1176.6,657.9 Z"/>
<path d="M1236.9,629.4 L1253.7,623.5 L1256.3,670.8 L1225.2,685.1 L1212.2,678 Z"/>
<path d="M1303,601.5 L1318.5,595.6 L1347.7,622.9 L1337.3,637.8 L1304.9,652 Z"/>
</g>
<!-- vertical shaft -->
<path d="M1238,830 L1247,800 L1252,860 L1260,858 L1268.9,1016.7 L1275.6,1021.6 L1266,1019 L1258,1008 L1250,868 L1240,850 Z" fill="#5d5b56"/>
<path d="M1254.4,619.6 L1301,599.5 L1304.9,652 L1318.5,646 L1326.7,828.4 L1316.5,834.8 L1325.1,996.7 L1319.3,1002.7 L1275.6,1021.6 L1268.9,1016.7 L1260,857.8 L1251.8,860 L1243,678.4 L1256.3,672.5 Z" fill="#4c4944" stroke="#f4f41c" stroke-width="1.5"/>

<!-- HANDLE -->
<!-- ring -->
<defs><linearGradient id="gring" gradientUnits="userSpaceOnUse" x1="712" y1="335" x2="736" y2="395"><stop offset="0" stop-color="#474747"/><stop offset="0.6" stop-color="#505050"/><stop offset="1" stop-color="#6a6a6a"/></linearGradient></defs>
<path d="M692,337 C695,334 698,333 700,333 L705,334.5 L710,345 L716,360 L720,378 L725,398 L714,414 C709,409 706,402 703,395 L696,370 L691.5,349 C691,344 691,340 692,337 Z" fill="#2e2e31"/>
<path d="M700,333 C702,331.5 705,331 707,331.5 C711,331.5 714,332.5 717,334 C720,337 722,341 724,345 L733,368 L740,385 L745,396 L725,398 L721,378 L716,358 L709,340 Z" fill="url(#gring)" stroke="#2a2a2a" stroke-width="0.6"/>
<!-- 3D side + cap -->
<path d="M712,428 C712,410 728,397 749,395.5 C765,395 780,398 787.1,404 L719.6,431.8 L728.9,650 L724.4,655.6 L724.9,664.4 L741.8,694.4 L731,682 L718,660 C714,650 716,640 721,636 Z" fill="#474747"/>
<path d="M720,420 C722,408 735,400 752,399 C766,398.6 778,400.5 785,404.3 L719.6,431.8 Z" fill="#4e4e4e"/>
<!-- cut face -->
<path d="M719.6,431.8 L785.5,404.3 C786.8,404.3 787.4,405 787.5,406.5 L794.6,560 L798.5,623.5 L803.7,623.5 L804.4,628.7 L787.8,676.7 L783.3,678.9 L784.4,707.1 L751.1,722.2 L748.9,693.3 L741.8,694.4 L724.9,664.4 L724.4,655.6 L728.9,650 Z" fill="#323232" stroke="#f4f41c" stroke-width="1.5"/>
<ellipse cx="755.5" cy="457.5" rx="21.5" ry="23" transform="rotate(20 755.5 457.5)" fill="#4a4a4a" stroke="#f4f41c" stroke-width="1.2"/>
<path d="M740,448.9 L768.9,437.8 L771.1,466.7 L742.7,477.1 Z" fill="#323232" stroke="#f4f41c" stroke-width="1.2"/>

</g>
</svg>
<!-- /MODEL-SVG -->
<div class="t" style="left:7.5px;top:713.3px;color:#c3cad6;font-size:13.5px;line-height:16px;letter-spacing:0;">Clippen-Zustand:A</div>
</div>
<!-- STATUS -->
<div class="abs" style="left:4px;top:1038px;width:1762px;height:2px;background:#a9a9ab;"></div>
<div class="abs" id="status" style="left:4px;top:1040px;width:1762px;height:36px;background:#eeeeef;"></div>
<div class="abs" style="left:10px;top:1050px;width:22px;height:21px;border:1px solid #b8b8bc;background:#e2e2e4;box-sizing:border-box;"></div>
<svg class="abs" style="left:13px;top:1051px" width="16" height="19" viewBox="0 0 16 19"><g fill="#fff" stroke="#1a2a6a" stroke-width="1"><path d="M5,4 V16 M5,10 H11" fill="none"/><rect x="3" y="1.500" width="3.500" height="3.500"/><rect x="3" y="8" width="3.500" height="3.500"/><rect x="3" y="14.500" width="3.500" height="3.500"/><rect x="10" y="8" width="3.500" height="3.500"/></g></svg>
<div class="abs" style="left:36px;top:1050px;width:22px;height:21px;border:1px solid #d0d0d4;background:#f0f0f1;box-sizing:border-box;"></div>
<svg class="abs" style="left:38px;top:1052px" width="18" height="17" viewBox="0 0 18 17"><circle cx="9" cy="8.500" r="6.500" fill="#3a9ae0" stroke="#1a5aa0" stroke-width="0.800"/><path d="M5,6 C7,3 11,4 10,7 C9,9 12,10 13,12 C10,15 6,14 5,11 C6,9 4,8 5,6 Z" fill="#5ac040"/><ellipse cx="9" cy="8.500" rx="9" ry="3.500" fill="none" stroke="#f0b020" stroke-width="1.500" transform="rotate(-35 9 8.500)"/></svg>
<div class="abs" style="left:67px;top:1047px;width:1px;height:26px;background:#d4d4d8;"></div>
<div class="abs" style="left:1035px;top:1042px;width:1px;height:32px;background:#d4d4d8;"></div>
<svg class="abs" style="left:1042px;top:1048px" width="16" height="16" viewBox="0 0 16 16"><rect x="1" y="1" width="11" height="11" fill="#fdfdfd" stroke="#1a3a8c" stroke-width="1.400"/><circle cx="7" cy="7" r="3.800" fill="#e8f4f8" stroke="#444" stroke-width="1.100"/><path d="M10,10 L14.500,14.500" stroke="#444" stroke-width="2"/></svg>
<svg class="abs" style="left:1066px;top:1048px" width="17" height="17" viewBox="0 0 17 17"><circle cx="6.500" cy="6.500" r="5" fill="#f4f8fa" stroke="#444" stroke-width="1.300"/><path d="M4,6.500 H9 M6.500,4 V9" stroke="#222" stroke-width="1.200"/><path d="M10.500,10.500 L15.500,15.500" stroke="#8a4a1a" stroke-width="2.200"/></svg>
<svg class="abs" style="left:1090px;top:1048px" width="17" height="17" viewBox="0 0 17 17"><circle cx="6.500" cy="6.500" r="5" fill="#f4f8fa" stroke="#444" stroke-width="1.300"/><path d="M4,6.500 H9" stroke="#222" stroke-width="1.200"/><path d="M10.500,10.500 L15.500,15.500" stroke="#8a4a1a" stroke-width="2.200"/></svg>
<svg class="abs" style="left:1114px;top:1049px" width="15" height="15" viewBox="0 0 15 15"><rect x="1" y="1" width="13" height="13" fill="#eaf2ff" stroke="#1a3a8c" stroke-width="1.400"/><path d="M3.500,11.500 L11,4 L11.500,8 Z" fill="#2a5ac8"/><path d="M4,12 C6,11 8,9 9,6" stroke="#2a5ac8" stroke-width="1" fill="none" stroke-dasharray="1.500 1"/></svg>
<svg class="abs" style="left:1138px;top:1049px" width="17" height="15" viewBox="0 0 17 15"><path d="M1.500,4.500 L4.500,1.500 H15.500 V10.500 L12.500,13.500 H1.500 Z" fill="#fdfdfd" stroke="#555" stroke-width="1"/><path d="M12.500,4.500 L15.500,1.500 V10.500 L12.500,13.500 Z" fill="#5ad0d8"/><path d="M1.500,4.500 H12.500 V13.500" fill="none" stroke="#555" stroke-width="0.900"/></svg>
<span class="da" style="left:1161.5px;top:1054px;border-top-color:#33333f"></span>
<svg class="abs" style="left:1175px;top:1048px" width="20" height="17" viewBox="0 0 20 17"><path d="M1.500,8 L3.500,6 H12 V13 L10,15 H1.500 Z" fill="#fdfdfd" stroke="#555" stroke-width="1"/><path d="M7,6 C7,3 9,2 11,3" fill="none" stroke="#444" stroke-width="0.900"/></svg>
<div class="t" style="left:1185px;top:1046px;font-size:8px;line-height:9px;color:#222;letter-spacing:-0.300px;">AB</div>
<span class="da" style="left:1199.5px;top:1054px;border-top-color:#33333f"></span>
<svg class="abs" style="left:1212px;top:1048px" width="18" height="16" viewBox="0 0 18 16"><rect x="1" y="1" width="11" height="9" fill="#fdfdfd" stroke="#666" stroke-width="0.900"/><rect x="4" y="6" width="13" height="9" rx="1" fill="#d8d8d8" stroke="#333" stroke-width="1.100"/><circle cx="10.500" cy="10.500" r="2.800" fill="#fff" stroke="#222" stroke-width="1.100"/><rect x="8" y="4.500" width="5" height="2" fill="#666"/></svg>
<svg class="abs" style="left:1237px;top:1047px" width="19" height="18" viewBox="0 0 19 18"><g stroke="#8a4a1a" stroke-width="1.300"><path d="M9,3 L11,17 M3,7 L17,15 M16.500,6 L4,16"/><path d="M2,1.500 l3,3 m0,-3 l-3,3"/></g><path d="M9,2 h3 l-3,3.500 h3 M13.500,9 l3,3 m0,-3 l-3,3" stroke="#333" stroke-width="0.800" fill="none"/></svg>
<span class="da" style="left:1261.5px;top:1054px;border-top-color:#33333f"></span>
<svg class="abs" style="left:1275px;top:1047px" width="16" height="19" viewBox="0 0 16 19"><rect x="1" y="1" width="7" height="4" fill="#ffe760" stroke="#6a5a10" stroke-width="0.800"/><path d="M8,3 H14 M9,6 h4 l-4,4 h4" stroke="#222" stroke-width="0.900" fill="none"/><path d="M5,13 C7,10.500 11,10.500 13,13 C11,15.500 7,15.500 5,13 Z" fill="#fff" stroke="#444" stroke-width="0.900"/><circle cx="9" cy="13" r="1.400" fill="#1a6a2a"/><path d="M6,17 H12" stroke="#444" stroke-width="0.900"/></svg>
<svg class="abs" style="left:1299px;top:1047px" width="18" height="19" viewBox="0 0 18 19"><path d="M4,3.500 L8.500,9.500 L4,15.500 M8.500,9.500 H14" stroke="#222" stroke-width="1.200" fill="none"/><circle cx="4" cy="3.500" r="2.300" fill="#20c040" stroke="#0a5a1a" stroke-width="0.800"/><circle cx="4" cy="15.500" r="2.300" fill="#40d8e8" stroke="#0a5a7a" stroke-width="0.800"/><circle cx="14.500" cy="9.500" r="2.300" fill="#e02020" stroke="#7a0a0a" stroke-width="0.800"/></svg>
<div class="abs" style="left:1352px;top:1042px;width:1px;height:32px;background:#d8d8dc;"></div>
<div class="abs" style="left:1356px;top:1052px;width:11px;height:11px;border-radius:6px;background:#4ad04a;"></div>
<div class="abs" style="left:1369px;top:1054px;width:6px;height:6px;border-radius:3px;background:#c4c4c8;"></div>
<div class="abs" style="left:1376px;top:1054px;width:6px;height:6px;border-radius:3px;background:#c4c4c8;"></div>
<div class="abs" style="left:1388px;top:1044px;width:41px;height:28px;border:1px solid #c4c4c8;border-radius:3px;background:#f4f4f5;box-sizing:border-box;"></div>
<svg class="abs" style="left:1399px;top:1049px" width="18" height="18" viewBox="0 0 18 18"><g fill="#2c2c30"><rect x="2" y="2" width="4" height="4" rx="0.500"/><rect x="12" y="2" width="4" height="4" rx="0.500"/><rect x="1" y="5" width="6" height="11" rx="1.200"/><rect x="11" y="5" width="6" height="11" rx="1.200"/><rect x="6.500" y="5" width="5" height="5"/></g><rect x="2.200" y="7" width="1.300" height="7" fill="#aaa"/><rect x="12.200" y="7" width="1.300" height="7" fill="#aaa"/></svg>
<div class="abs" style="left:1434px;top:1044px;width:40px;height:28px;border:1px solid #c4c4c8;border-radius:3px;background:#f4f4f5;box-sizing:border-box;"></div>
<svg class="abs" style="left:1445px;top:1050px" width="18" height="16" viewBox="0 0 18 16"><path d="M1.500,5 L4.500,1.500 H16.500 V11 L13.500,14.500 H1.500 Z" fill="#fdfdfd" stroke="#222" stroke-width="1.200"/><path d="M1.500,5 H13.500 V14.500 M13.500,5 L16.500,1.500" fill="none" stroke="#222" stroke-width="1.200"/><rect x="4" y="7.500" width="7" height="5" fill="#48d8e8"/><rect x="6" y="9" width="3" height="3" fill="#f0e020"/></svg>
<div class="abs" style="left:1570px;top:1047px;width:177px;height:22px;border:1px solid #c8c8cc;background:linear-gradient(#fdfdfd,#f0f0f1);box-sizing:border-box;"></div>
<div class="abs" style="left:1732px;top:1048px;width:1px;height:20px;background:#d0d0d4;"></div>
<div class="t" style="left:1577px;top:1050px;font-size:13px;letter-spacing:0;line-height:15px;color:#3a3a44;">Smart</div>
<span class="da" style="left:1736.5px;top:1056px;border-top-color:#33333f"></span>
<!-- /STATUS -->
</div>
</body>
</html>
